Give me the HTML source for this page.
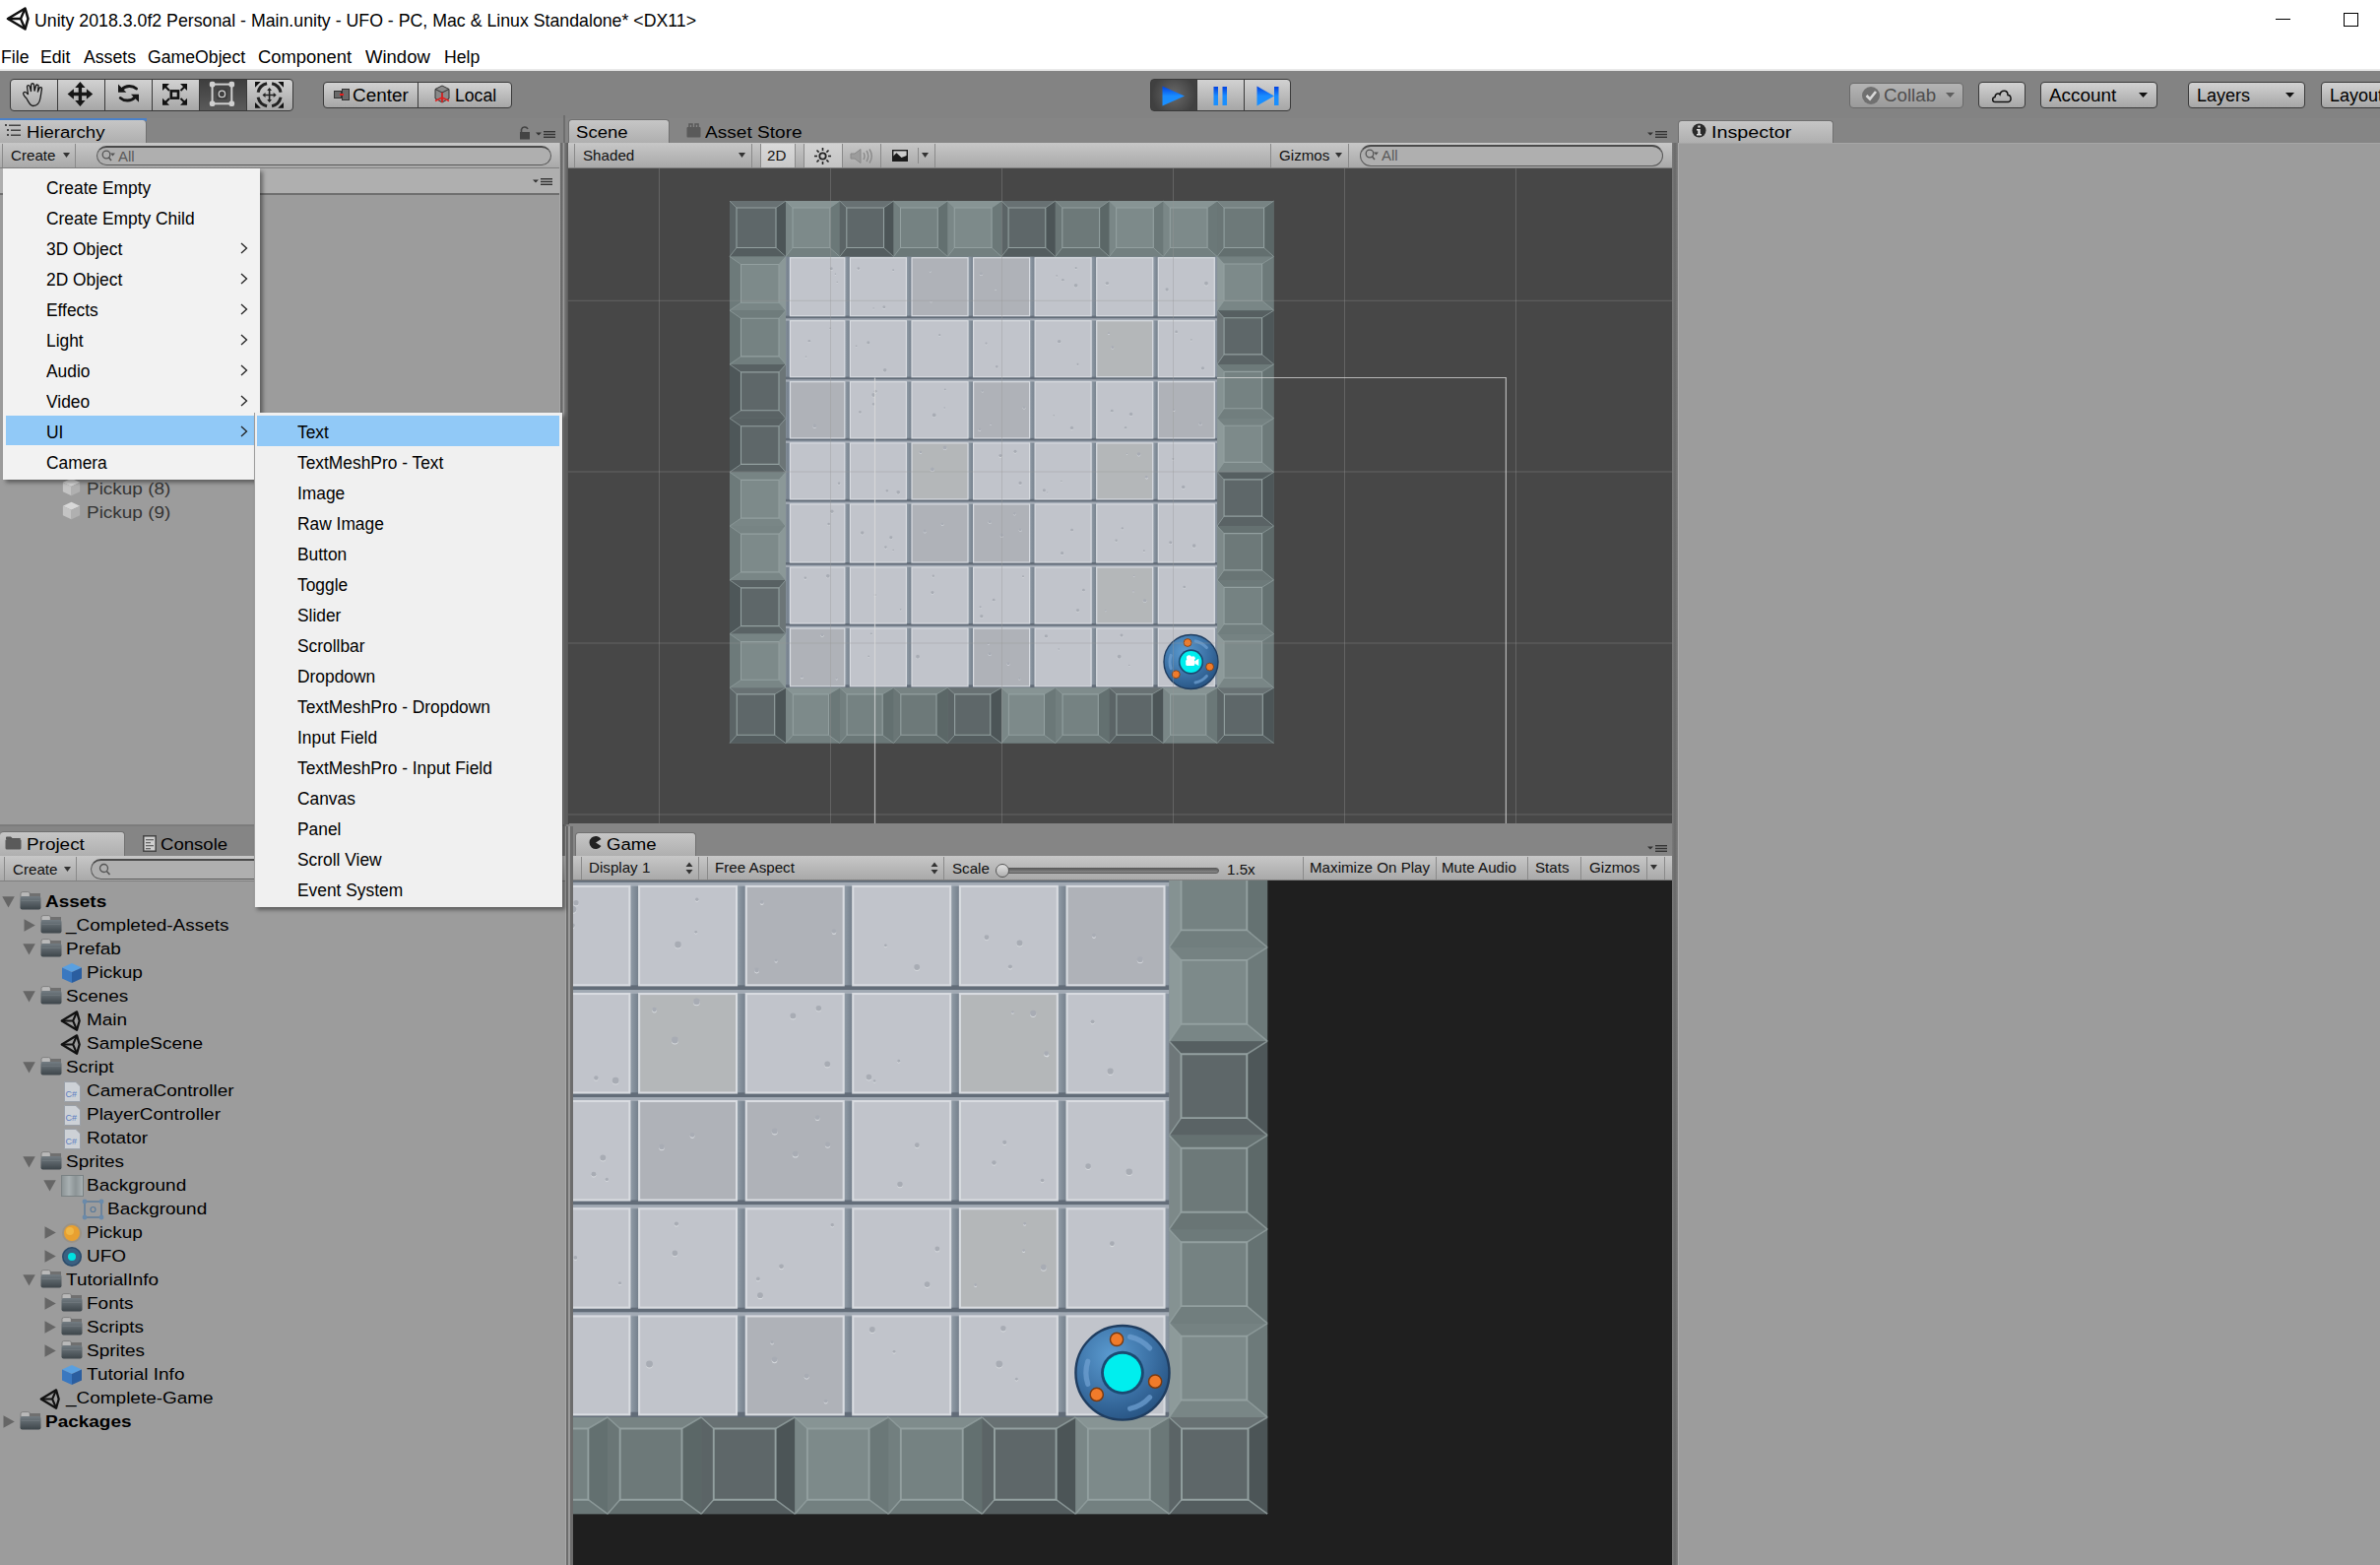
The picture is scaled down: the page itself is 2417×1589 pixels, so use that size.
<!DOCTYPE html><html><head><meta charset="utf-8"><style>
*{box-sizing:border-box}
html,body{margin:0;padding:0;width:2417px;height:1589px;overflow:hidden;background:#fff;font-family:"Liberation Sans",sans-serif;color:#000}
.a{position:absolute}
.t{position:absolute;white-space:nowrap;line-height:1;font-family:"Liberation Sans",sans-serif}
.tbtn{position:absolute;border:1.5px solid #3a3a3a;background:linear-gradient(#d2d2d2,#a6a6a6)}
.tab{position:absolute;background:linear-gradient(#c6c6c6,#afafaf);border:1px solid #707070;border-bottom:none;border-radius:4px 4px 0 0}
.tbar{position:absolute;background:linear-gradient(#c7c7c7,#a9a9a9);border-bottom:1px solid #808080}
.sep{position:absolute;width:1px;background:#8a8a8a}
.menu{position:absolute;background:#f2f2f2;box-shadow:3px 3px 4px rgba(0,0,0,.4)}
.pill{position:absolute;border:1.5px solid #5a5a5a;border-top:2px solid #4a4a4a;border-radius:12px;background:#afafaf}
</style></head><body>
<svg class="a" style="left:6px;top:7px" width="24" height="24" viewBox="0 0 24 24"><path d="M19.5 1.5 L2 12 L19.5 22.5 L22.5 12 Z" fill="none" stroke="#111" stroke-width="2.6" stroke-linejoin="round"/><path d="M2 12 L15 12 M19.5 1.5 L15 12 L19.5 22.5" fill="none" stroke="#111" stroke-width="2.4"/></svg>
<div class="t" style="left:34.5px;top:12.0px;font-size:18.6px;color:#000;font-weight:normal;transform:scaleX(0.954);transform-origin:0 0;">Unity 2018.3.0f2 Personal - Main.unity - UFO - PC, Mac &amp; Linux Standalone* &lt;DX11&gt;</div>
<div class="a" style="left:2311px;top:19px;width:15px;height:1px;background:#000"></div>
<div class="a" style="left:2380px;top:12.5px;width:15px;height:14.5px;border:1px solid #000"></div>
<div class="t" style="left:1px;top:49.1px;font-size:18.7px;color:#000;font-weight:normal;transform:scaleX(0.945);transform-origin:0 0;">File</div>
<div class="t" style="left:41px;top:49.1px;font-size:18.7px;color:#000;font-weight:normal;transform:scaleX(0.945);transform-origin:0 0;">Edit</div>
<div class="t" style="left:84.5px;top:49.1px;font-size:18.7px;color:#000;font-weight:normal;transform:scaleX(0.945);transform-origin:0 0;">Assets</div>
<div class="t" style="left:150px;top:49.1px;font-size:18.7px;color:#000;font-weight:normal;transform:scaleX(0.945);transform-origin:0 0;">GameObject</div>
<div class="t" style="left:261.5px;top:49.1px;font-size:18.7px;color:#000;font-weight:normal;transform:scaleX(0.985);transform-origin:0 0;">Component</div>
<div class="t" style="left:370.5px;top:49.1px;font-size:18.7px;color:#000;font-weight:normal;transform:scaleX(0.99);transform-origin:0 0;">Window</div>
<div class="t" style="left:450.5px;top:49.1px;font-size:18.7px;color:#000;font-weight:normal;transform:scaleX(0.945);transform-origin:0 0;">Help</div>
<div class="a" style="left:0;top:70px;width:2417px;height:2px;background:#e9e9e9"></div>
<div class="a" style="left:0;top:72px;width:2417px;height:48px;background:#838383"></div>
<div class="tbtn" style="left:10px;top:80px;width:49px;height:33px;border-radius:4px 0 0 4px"></div>
<div class="tbtn" style="left:58px;top:80px;width:49px;height:33px;border-radius:0"></div>
<div class="tbtn" style="left:106px;top:80px;width:49px;height:33px;border-radius:0"></div>
<div class="tbtn" style="left:154px;top:80px;width:49px;height:33px;border-radius:0"></div>
<div class="tbtn" style="left:202px;top:80px;width:49px;height:33px;background:linear-gradient(#3e3e3e,#5a5a5a);border-radius:0"></div>
<div class="tbtn" style="left:250px;top:80px;width:48px;height:33px;border-radius:0 4px 4px 0"></div>
<svg class="a" style="left:10px;top:80px" width="290" height="33" viewBox="0 0 290 33"><path d="M17 20 C14 17 12.5 14.5 14.5 13.5 C16 13 17.5 14.5 18.5 16 L17.5 8 C17.3 6.3 19.8 6 20.2 7.6 L21.5 13 L21.7 6 C21.8 4.3 24.3 4.3 24.5 6 L25 12.5 L26.5 7 C27 5.5 29.3 5.8 29 7.5 L28.3 13.5 L30 9.5 C30.6 8 32.8 8.5 32.5 10.2 L31 19.5 C30.3 24 28.3 27.5 23.5 27.5 C20.5 27.5 19 23.5 17 20 Z" fill="none" stroke="#1a1a1a" stroke-width="1.3"/><path d="M71.4 2.9 L76.6 9 L73.1 9 L73.1 13.8 L77.9 13.8 L77.9 10.3 L84.2 15.5 L77.9 20.7 L77.9 17.2 L73.1 17.2 L73.1 22 L76.6 22 L71.4 28.1 L66.2 22 L69.7 22 L69.7 17.2 L64.9 17.2 L64.9 20.7 L58.6 15.5 L64.9 10.3 L64.9 13.8 L69.7 13.8 L69.7 9 L66.2 9 Z" fill="#161616"/><path d="M128.5 10 A9.5 8 0 0 0 114 10.5" fill="none" stroke="#161616" stroke-width="3" stroke-linecap="round"/><path d="M110 5.5 L110 13.8 L118.3 13.8 Z" fill="#161616"/><path d="M112.3 19.5 A9.5 8 0 0 0 126.8 19" fill="none" stroke="#161616" stroke-width="3" stroke-linecap="round"/><path d="M131 15.8 L131 23.8 L123 15.8 Z" fill="#161616"/><rect x="163.8" y="12.4" width="7.2" height="7.2" fill="none" stroke="#111" stroke-width="2.6"/><path d="M156.5 6.5 L162 12 M179 6.5 L173.5 12 M156.5 25.5 L162 20 M179 25.5 L173.5 20" stroke="#111" stroke-width="2"/><path d="M155 5 L162 5 L155 12 Z M180 5 L173 5 L180 12 Z M155 26.8 L162 26.8 L155 19.8 Z M180 26.8 L173 26.8 L180 19.8 Z" fill="#111"/><rect x="205.6" y="5.6" width="19.7" height="19.7" fill="none" stroke="#cfcfcf" stroke-width="2"/><rect x="210" y="10" width="11" height="11" rx="2" fill="#3e3e3e"/><rect x="202.8" y="2.8" width="5.6" height="5.6" rx="2" fill="#cfcfcf"/><rect x="222.5" y="2.8" width="5.6" height="5.6" rx="2" fill="#cfcfcf"/><rect x="202.8" y="22.5" width="5.6" height="5.6" rx="2" fill="#cfcfcf"/><rect x="222.5" y="22.5" width="5.6" height="5.6" rx="2" fill="#cfcfcf"/><circle cx="215.4" cy="15.4" r="3.2" fill="none" stroke="#cfcfcf" stroke-width="1.3"/><path d="M275.1 18.7 A11.8 11.8 0 0 1 266.1 27.7 M261.1 27.7 A11.8 11.8 0 0 1 252.1 18.7 M252.1 13.7 A11.8 11.8 0 0 1 261.1 4.7 M266.1 4.7 A11.8 11.8 0 0 1 275.1 13.7" fill="none" stroke="#222" stroke-width="3"/><path d="M249 3.1 L254.8 3.1 L249 8.8 Z M278 3.1 L272.2 3.1 L278 8.8 Z M249 29.7 L254.8 29.7 L249 24 Z M278 29.7 L272.2 29.7 L278 24 Z" fill="#111"/><path d="M263.6 10 L263.6 23 M257.5 16.5 L269.7 16.5" stroke="#222" stroke-width="1.6"/><path d="M263.6 9 L266 12 L261.2 12 Z M263.6 24 L266 21 L261.2 21 Z M256.5 16.5 L259.5 14 L259.5 19 Z M270.7 16.5 L267.7 14 L267.7 19 Z" fill="#222"/></svg>
<div class="tbtn" style="left:328px;top:83px;width:97px;height:27px;border-radius:4px 0 0 4px"></div>
<div class="tbtn" style="left:424px;top:83px;width:96px;height:27px;border-radius:0 4px 4px 0"></div>
<svg class="a" style="left:339px;top:90px" width="16" height="12"><rect x="0.5" y="2.5" width="7" height="7" fill="#6a6a6a" stroke="#333"/><rect x="8.5" y="0.5" width="7" height="11" fill="#6a6a6a" stroke="#333"/><rect x="6" y="5" width="4" height="2" fill="#e02020"/></svg>
<div class="t" style="left:358px;top:87.7px;font-size:18px;color:#000;font-weight:normal;transform:scaleX(1.05);transform-origin:0 0;">Center</div>
<svg class="a" style="left:441px;top:86px" width="16" height="20" viewBox="0 0 16 20"><path d="M8 1 L15 4.5 L15 14 L8 18 L1 14 L1 4.5 Z" fill="#8a8a8a" stroke="#333"/><path d="M1 4.5 L8 8 L15 4.5 M8 8 L8 18" fill="none" stroke="#333"/><path d="M8 8 L8 18 M8 13 L1 16.5 M8 13 L15 16.5" stroke="#e02020" stroke-width="1.6"/></svg>
<div class="t" style="left:461.5px;top:87.7px;font-size:18px;color:#000;font-weight:normal;transform:scaleX(0.98);transform-origin:0 0;">Local</div>
<div class="tbtn" style="left:1168px;top:80px;width:48px;height:33px;border-radius:4px 0 0 4px;background:radial-gradient(circle at 50% 50%,#6a6a6a,#404040 80%)"></div>
<div class="tbtn" style="left:1215px;top:80px;width:49px;height:33px"></div>
<div class="tbtn" style="left:1263px;top:80px;width:48px;height:33px;border-radius:0 4px 4px 0"></div>
<svg class="a" style="left:1168px;top:80px" width="143" height="33"><defs><linearGradient id="bl" x1="0" y1="0" x2="0" y2="1"><stop offset="0" stop-color="#0040e0"/><stop offset="0.5" stop-color="#1a8cff"/><stop offset="1" stop-color="#1a90ff"/></linearGradient></defs><path d="M12.5 7.5 L35 17.5 L12.5 27.5 Z" fill="url(#bl)"/><rect x="64.5" y="8" width="4.5" height="19" fill="url(#bl)"/><rect x="73.5" y="8" width="4.5" height="19" fill="url(#bl)"/><path d="M108.5 7.5 L126 17.5 L108.5 27.5 Z" fill="url(#bl)"/><rect x="126" y="8" width="4.5" height="19" fill="url(#bl)"/></svg>
<div class="tbtn" style="left:1878px;top:84px;width:116px;height:26px;border-radius:4px;border-color:#6a6a6a;background:linear-gradient(#b4b4b4,#9a9a9a)"></div>
<svg class="a" style="left:1890px;top:87px" width="20" height="20"><circle cx="10" cy="10" r="9" fill="#707070"/><path d="M5.5 10 L9 13.5 L15 6" fill="none" stroke="#d8d8d8" stroke-width="2.6"/></svg>
<div class="t" style="left:1913px;top:87.7px;font-size:18px;color:#4e4e4e;font-weight:normal;transform:scaleX(1.04);transform-origin:0 0;">Collab</div>
<svg class="a" style="left:1976px;top:94px" width="10" height="6"><path d="M0 0 L9 0 L4.5 5 Z" fill="#5e5e5e"/></svg>
<div class="tbtn" style="left:2009px;top:83px;width:48px;height:27px;border-radius:4px"></div>
<svg class="a" style="left:2022px;top:89px" width="22" height="16" viewBox="0 0 22 16"><path d="M4 14.5 C1 14.5 0.8 10 4 9.5 C4 6 7.5 5 9 7 C10 2 17 2 17 7.5 C21 7.5 21 14.5 17.5 14.5 Z" fill="none" stroke="#111" stroke-width="1.5"/></svg>
<div class="tbtn" style="left:2072px;top:83px;width:119px;height:27px;border-radius:4px"></div>
<div class="t" style="left:2081px;top:87.7px;font-size:18px;color:#000;font-weight:normal;transform:scaleX(1.05);transform-origin:0 0;">Account</div>
<svg class="a" style="left:2172px;top:94px" width="10" height="6"><path d="M0 0 L9 0 L4.5 5 Z" fill="#111"/></svg>
<div class="tbtn" style="left:2222px;top:83px;width:119px;height:27px;border-radius:4px"></div>
<div class="t" style="left:2231px;top:87.7px;font-size:18px;color:#000;font-weight:normal;">Layers</div>
<svg class="a" style="left:2321px;top:94px" width="10" height="6"><path d="M0 0 L9 0 L4.5 5 Z" fill="#111"/></svg>
<div class="tbtn" style="left:2357px;top:83px;width:80px;height:27px;border-radius:4px"></div>
<div class="t" style="left:2366px;top:87.7px;font-size:18px;color:#000;font-weight:normal;">Layout</div>
<div class="a" style="left:0;top:120px;width:2417px;height:1469px;background:#858585"></div>
<div class="a" style="left:0;top:120px;width:149px;height:3px;background:#4a80c8"></div>
<div class="tab" style="left:0;top:122px;width:149px;height:23px;border-left:none;border-top:none;border-radius:0 4px 0 0"></div>
<svg class="a" style="left:5px;top:126px" width="18" height="13"><rect x="0" y="0" width="2" height="2" fill="#444"/><rect x="4" y="0.5" width="12" height="1.5" fill="#444"/><rect x="2" y="5" width="2" height="2" fill="#444"/><rect x="6" y="5.5" width="10" height="1.5" fill="#444"/><rect x="2" y="10" width="2" height="2" fill="#444"/><rect x="6" y="10.5" width="10" height="1.5" fill="#444"/></svg>
<div class="t" style="left:26.5px;top:125.7px;font-size:17.2px;color:#000;font-weight:normal;transform:scaleX(1.08);transform-origin:0 0;">Hierarchy</div>
<svg class="a" style="left:527px;top:128px" width="12" height="14" viewBox="0 0 12 14"><path d="M2.5 6 L2.5 3.5 A3.5 3.5 0 0 1 9 3" fill="none" stroke="#444" stroke-width="1.6"/><rect x="1" y="6" width="10" height="7.5" fill="#444"/></svg>
<svg class="a" style="left:544px;top:133px" width="21" height="8"><path d="M0 1.5 L6 1.5 L3 4.5 Z" fill="#333"/><rect x="8" y="0" width="12" height="1.4" fill="#333"/><rect x="8" y="2.8" width="12" height="1.4" fill="#333"/><rect x="8" y="5.6" width="12" height="1.4" fill="#333"/></svg>
<div class="tbar" style="left:0;top:145px;width:570px;height:26px"></div>
<div class="sep" style="left:2px;top:146px;height:24px"></div>
<div class="t" style="left:11px;top:151.3px;font-size:14.3px;color:#111;font-weight:normal;transform:scaleX(1.06);transform-origin:0 0;">Create</div>
<svg class="a" style="left:64px;top:155px" width="8" height="6"><path d="M0 0 L7 0 L3.5 5 Z" fill="#333"/></svg>
<div class="sep" style="left:76px;top:146px;height:24px"></div>
<div class="pill" style="left:98px;top:148px;width:462px;height:20px"></div>
<svg class="a" style="left:103px;top:152px" width="18" height="13"><circle cx="5" cy="5" r="3.8" fill="none" stroke="#555" stroke-width="1.3"/><path d="M7.5 8 L10 11" stroke="#555" stroke-width="1.5"/><path d="M9 3.5 L14 3.5 L11.5 6.5 Z" fill="#555"/></svg>
<div class="t" style="left:120px;top:150.8px;font-size:15px;color:#5a5a5a;font-weight:normal;">All</div>
<div class="a" style="left:0;top:171px;width:570px;height:666px;background:#9c9c9c"></div>
<div class="a" style="left:0;top:171px;width:570px;height:27px;background:#afafaf;border-bottom:2px solid #6f6f6f"></div>
<svg class="a" style="left:541px;top:181px" width="21" height="8"><path d="M0 1.5 L6 1.5 L3 4.5 Z" fill="#333"/><rect x="8" y="0" width="12" height="1.4" fill="#333"/><rect x="8" y="2.8" width="12" height="1.4" fill="#333"/><rect x="8" y="5.6" width="12" height="1.4" fill="#333"/></svg>
<div class="a" style="left:568px;top:145px;width:10px;height:692px;background:linear-gradient(90deg,#a8a8a8 0,#a8a8a8 1px,#6a6a6a 1px,#6c6c6c 3.3px,#7e7e7e 3.3px,#8a8a8a 4.3px,#9a9a9a 4.3px,#9a9a9a 5px,#7c7c7c 5px,#5a5a5a 9px,#474747 10px)"></div>
<svg class="a" style="left:63px;top:485px" width="19" height="19" viewBox="0 0 22 22"><path d="M11 1 L21 5.5 L11 10 L1 5.5 Z" fill="#d8d8d8"/><path d="M1 5.5 L11 10 L11 21 L1 16.5 Z" fill="#c4c4c4"/><path d="M21 5.5 L11 10 L11 21 L21 16.5 Z" fill="#b0b0b0"/></svg>
<div class="t" style="left:88px;top:488.7px;font-size:16.8px;color:#333;font-weight:normal;transform:scaleX(1.13);transform-origin:0 0;">Pickup (8)</div>
<svg class="a" style="left:63px;top:509px" width="19" height="19" viewBox="0 0 22 22"><path d="M11 1 L21 5.5 L11 10 L1 5.5 Z" fill="#d8d8d8"/><path d="M1 5.5 L11 10 L11 21 L1 16.5 Z" fill="#c4c4c4"/><path d="M21 5.5 L11 10 L11 21 L21 16.5 Z" fill="#b0b0b0"/></svg>
<div class="t" style="left:88px;top:512.7px;font-size:16.8px;color:#333;font-weight:normal;transform:scaleX(1.13);transform-origin:0 0;">Pickup (9)</div>
<div class="a" style="left:0;top:837px;width:575px;height:2px;background:#7c7c7c"></div>
<div class="tab" style="left:0;top:844px;width:127px;height:25px;border-left:none"></div>
<svg class="a" style="left:5px;top:849px" width="17" height="14" viewBox="0 0 17 14"><path d="M1 3 L1 1.5 Q1 0.5 2 0.5 L6 0.5 L7.5 2 L15 2 Q16 2 16 3 Z" fill="#555"/><rect x="0.5" y="3" width="16" height="10.5" rx="1.5" fill="#5a5a5a"/></svg>
<div class="t" style="left:26.5px;top:848.7px;font-size:17.2px;color:#000;font-weight:normal;transform:scaleX(1.1);transform-origin:0 0;">Project</div>
<svg class="a" style="left:145px;top:848px" width="14" height="17" viewBox="0 0 14 17"><rect x="0.8" y="0.8" width="12.4" height="15.4" fill="#d0d0d0" stroke="#444" stroke-width="1.5"/><rect x="3" y="4" width="8" height="1.3" fill="#666"/><rect x="3" y="7" width="5" height="1.3" fill="#666"/><rect x="3" y="10" width="8" height="1.3" fill="#666"/><rect x="3" y="13" width="5" height="1.3" fill="#666"/></svg>
<div class="t" style="left:163px;top:848.7px;font-size:17.2px;color:#000;font-weight:normal;transform:scaleX(1.08);transform-origin:0 0;">Console</div>
<div class="tbar" style="left:0;top:869px;width:575px;height:26px"></div>
<div class="sep" style="left:4px;top:870px;height:24px"></div>
<div class="t" style="left:12.5px;top:875.6px;font-size:14.3px;color:#111;font-weight:normal;transform:scaleX(1.06);transform-origin:0 0;">Create</div>
<svg class="a" style="left:65px;top:880px" width="8" height="6"><path d="M0 0 L7 0 L3.5 5 Z" fill="#333"/></svg>
<div class="sep" style="left:77px;top:870px;height:24px"></div>
<div class="pill" style="left:92px;top:872px;width:470px;height:21px"></div>
<svg class="a" style="left:100px;top:876px" width="14" height="14"><circle cx="5.5" cy="5.5" r="4" fill="none" stroke="#555" stroke-width="1.3"/><path d="M8.3 8.5 L11.5 12" stroke="#555" stroke-width="1.6"/></svg>
<div class="a" style="left:0;top:895px;width:575px;height:694px;background:#9c9c9c"></div>
<div class="a" style="left:574px;top:839px;width:8px;height:750px;background:linear-gradient(90deg,#a8a8a8 0,#a8a8a8 1px,#6a6a6a 1px,#6e6e6e 3px,#9a9a9a 3px,#9a9a9a 5.3px,#6c6c6c 5.3px,#6c6c6c 8px)"></div>
<div class="a" style="left:572px;top:117px;width:1.5px;height:28px;background:#6e6e6e"></div>
<div class="tab" style="left:577px;top:121px;width:103px;height:24px"></div>
<div class="t" style="left:585px;top:125.7px;font-size:17.2px;color:#000;font-weight:normal;transform:scaleX(1.08);transform-origin:0 0;">Scene</div>
<svg class="a" style="left:697px;top:125px" width="15" height="15" viewBox="0 0 15 15"><rect x="0.5" y="4" width="14" height="10.5" rx="1" fill="#5a5a5a"/><path d="M3 4 L3 1 L6 1 L6 4 M9 4 L9 1 L12 1 L12 4" fill="none" stroke="#5a5a5a" stroke-width="1.6"/></svg>
<div class="t" style="left:716px;top:125.7px;font-size:17.2px;color:#000;font-weight:normal;transform:scaleX(1.11);transform-origin:0 0;">Asset Store</div>
<svg class="a" style="left:1673px;top:133px" width="21" height="8"><path d="M0 1.5 L6 1.5 L3 4.5 Z" fill="#333"/><rect x="8" y="0" width="12" height="1.4" fill="#333"/><rect x="8" y="2.8" width="12" height="1.4" fill="#333"/><rect x="8" y="5.6" width="12" height="1.4" fill="#333"/></svg>
<div class="tbar" style="left:577px;top:145px;width:1121px;height:26px"></div>
<div class="sep" style="left:583px;top:146px;height:24px"></div>
<div class="t" style="left:592px;top:150.8px;font-size:14.3px;color:#111;font-weight:normal;transform:scaleX(1.06);transform-origin:0 0;">Shaded</div>
<svg class="a" style="left:750px;top:155px" width="8" height="6"><path d="M0 0 L7 0 L3.5 5 Z" fill="#333"/></svg>
<div class="sep" style="left:763px;top:146px;height:24px"></div><div class="sep" style="left:772px;top:146px;height:24px"></div>
<div class="a" style="left:773px;top:146px;width:34px;height:24px;background:linear-gradient(#dadada,#c8c8c8)"></div>
<div class="t" style="left:779px;top:150.8px;font-size:14.3px;color:#111;font-weight:normal;transform:scaleX(1.06);transform-origin:0 0;">2D</div>
<div class="sep" style="left:807px;top:146px;height:24px"></div><div class="sep" style="left:816px;top:146px;height:24px"></div>
<div class="a" style="left:817px;top:146px;width:38px;height:24px;background:linear-gradient(#d2d2d2,#c4c4c4)"></div>
<svg class="a" style="left:826px;top:149px" width="19" height="19" viewBox="0 0 19 19"><circle cx="9.5" cy="9.5" r="3.2" fill="none" stroke="#222" stroke-width="1.8"/><path d="M15.0 9.5 L18.0 9.5" stroke="#222" stroke-width="1.6"/><path d="M13.4 13.4 L15.5 15.5" stroke="#222" stroke-width="1.6"/><path d="M9.5 15.0 L9.5 18.0" stroke="#222" stroke-width="1.6"/><path d="M5.6 13.4 L3.5 15.5" stroke="#222" stroke-width="1.6"/><path d="M4.0 9.5 L1.0 9.5" stroke="#222" stroke-width="1.6"/><path d="M5.6 5.6 L3.5 3.5" stroke="#222" stroke-width="1.6"/><path d="M9.5 4.0 L9.5 1.0" stroke="#222" stroke-width="1.6"/><path d="M13.4 5.6 L15.5 3.5" stroke="#222" stroke-width="1.6"/></svg>
<div class="sep" style="left:855px;top:146px;height:24px"></div>
<svg class="a" style="left:863px;top:150px" width="24" height="17" viewBox="0 0 24 17"><path d="M1 6 L5 6 L11 1.5 L11 15.5 L5 11 L1 11 Z" fill="#9c9c9c" stroke="#888" stroke-width="1"/><path d="M14 5 Q16 8.5 14 12 M17 3 Q20.5 8.5 17 14 M20 1.5 Q24.5 8.5 20 15.5" fill="none" stroke="#8a8a8a" stroke-width="1.4"/></svg>
<div class="sep" style="left:894px;top:146px;height:24px"></div>
<svg class="a" style="left:906px;top:152px" width="16" height="12" viewBox="0 0 16 12"><rect x="0.7" y="0.7" width="14.6" height="10.6" fill="#cdcdcd" stroke="#1a1a1a" stroke-width="1.4"/><path d="M0.7 11.3 L0.7 7 L4.4 3.2 L9.5 8 L15.3 5.8 L15.3 11.3 Z" fill="#1a1a1a"/></svg>
<div class="sep" style="left:932px;top:150px;height:16px"></div>
<svg class="a" style="left:936px;top:155px" width="8" height="6"><path d="M0 0 L7 0 L3.5 5 Z" fill="#333"/></svg>
<div class="sep" style="left:949px;top:146px;height:24px"></div>
<div class="sep" style="left:1290px;top:146px;height:24px"></div>
<div class="t" style="left:1299px;top:150.8px;font-size:14.3px;color:#111;font-weight:normal;transform:scaleX(1.06);transform-origin:0 0;">Gizmos</div>
<svg class="a" style="left:1356px;top:155px" width="8" height="6"><path d="M0 0 L7 0 L3.5 5 Z" fill="#333"/></svg>
<div class="sep" style="left:1369px;top:146px;height:24px"></div>
<div class="pill" style="left:1381px;top:147px;width:308px;height:22px"></div>
<svg class="a" style="left:1386px;top:151px" width="18" height="13"><circle cx="5" cy="5" r="3.8" fill="none" stroke="#555" stroke-width="1.3"/><path d="M7.5 8 L10 11" stroke="#555" stroke-width="1.5"/><path d="M9 3.5 L14 3.5 L11.5 6.5 Z" fill="#555"/></svg>
<div class="t" style="left:1403px;top:149.8px;font-size:15px;color:#5a5a5a;font-weight:normal;">All</div>
<div class="a" style="left:577px;top:171px;width:1121px;height:665px;background:#474747;overflow:hidden" id="scene"><svg width="1121" height="665" style="position:absolute;left:0;top:0"><g transform="translate(164,33)"><rect x="0" y="0" width="552.6" height="550.6" fill="#6b7878"/><defs><linearGradient id="vg" x1="0" y1="0" x2="1" y2="0"><stop offset="0" stop-color="#939ea9"/><stop offset="1" stop-color="#737e8a"/></linearGradient></defs><rect x="57" y="56.5" width="438.1" height="437.8" fill="#8591a0"/><rect x="54.2" y="56.5" width="5.6" height="437.8" fill="url(#vg)"/><rect x="116.8" y="56.5" width="5.6" height="437.8" fill="url(#vg)"/><rect x="179.4" y="56.5" width="5.6" height="437.8" fill="url(#vg)"/><rect x="242.0" y="56.5" width="5.6" height="437.8" fill="url(#vg)"/><rect x="304.5" y="56.5" width="5.6" height="437.8" fill="url(#vg)"/><rect x="367.1" y="56.5" width="5.6" height="437.8" fill="url(#vg)"/><rect x="429.7" y="56.5" width="5.6" height="437.8" fill="url(#vg)"/><rect x="492.3" y="56.5" width="5.6" height="437.8" fill="url(#vg)"/><rect x="57" y="116.7" width="438.1" height="2.7" fill="#626c78"/><rect x="57" y="119.4" width="438.1" height="2.3" fill="#a2aab4"/><rect x="57" y="178.7" width="438.1" height="2.7" fill="#626c78"/><rect x="57" y="181.4" width="438.1" height="2.3" fill="#a2aab4"/><rect x="57" y="240.9" width="438.1" height="2.7" fill="#626c78"/><rect x="57" y="243.6" width="438.1" height="2.3" fill="#a2aab4"/><rect x="57" y="302.9" width="438.1" height="2.7" fill="#626c78"/><rect x="57" y="305.6" width="438.1" height="2.3" fill="#a2aab4"/><rect x="57" y="367.0" width="438.1" height="2.7" fill="#626c78"/><rect x="57" y="369.7" width="438.1" height="2.3" fill="#a2aab4"/><rect x="57" y="429.0" width="438.1" height="2.7" fill="#626c78"/><rect x="57" y="431.7" width="438.1" height="2.3" fill="#a2aab4"/><rect x="57" y="491.3" width="438.1" height="3" fill="#626c78"/><rect x="61.5" y="57.7" width="55.3" height="59.0" fill="#c1c4cb" stroke="#d9dce1" stroke-width="1.2"/><circle cx="109.2" cy="83.1" r="0.8" fill="#d6d9dd"/><circle cx="109.2" cy="82.5" r="0.8" fill="#a8acb4"/><circle cx="103.3" cy="69.4" r="1.5" fill="#d6d9dd"/><circle cx="103.3" cy="68.8" r="1.5" fill="#a8acb4"/><circle cx="107.4" cy="74.9" r="0.8" fill="#d6d9dd"/><circle cx="107.4" cy="74.3" r="0.8" fill="#a8acb4"/><rect x="122.4" y="57.7" width="57.0" height="59.0" fill="#c1c4cb" stroke="#d9dce1" stroke-width="1.2"/><circle cx="130.8" cy="69.2" r="1.3" fill="#d6d9dd"/><circle cx="130.8" cy="68.6" r="1.3" fill="#a8acb4"/><circle cx="166.1" cy="70.8" r="1.0" fill="#d6d9dd"/><circle cx="166.1" cy="70.2" r="1.0" fill="#a8acb4"/><circle cx="156.8" cy="108.4" r="1.5" fill="#d6d9dd"/><circle cx="156.8" cy="107.8" r="1.5" fill="#a8acb4"/><circle cx="146.1" cy="109.7" r="0.8" fill="#d6d9dd"/><circle cx="146.1" cy="109.1" r="0.8" fill="#a8acb4"/><rect x="185.0" y="57.7" width="57.0" height="59.0" fill="#afb2b8" stroke="#d9dce1" stroke-width="1.2"/><circle cx="203.7" cy="71.7" r="0.9" fill="#d6d9dd"/><circle cx="203.7" cy="71.1" r="0.9" fill="#a8acb4"/><circle cx="204.5" cy="102.4" r="0.9" fill="#d6d9dd"/><circle cx="204.5" cy="101.8" r="0.9" fill="#a8acb4"/><rect x="247.6" y="57.7" width="57.0" height="59.0" fill="#afb2b8" stroke="#d9dce1" stroke-width="1.2"/><circle cx="270.1" cy="90.1" r="0.8" fill="#d6d9dd"/><circle cx="270.1" cy="89.5" r="0.8" fill="#a8acb4"/><circle cx="255.5" cy="74.5" r="1.6" fill="#d6d9dd"/><circle cx="255.5" cy="73.9" r="1.6" fill="#a8acb4"/><rect x="310.1" y="57.7" width="57.0" height="59.0" fill="#c1c4cb" stroke="#d9dce1" stroke-width="1.2"/><circle cx="351.6" cy="86.4" r="1.9" fill="#d6d9dd"/><circle cx="351.6" cy="85.8" r="1.9" fill="#a8acb4"/><circle cx="332.2" cy="76.5" r="0.9" fill="#d6d9dd"/><circle cx="332.2" cy="75.9" r="0.9" fill="#a8acb4"/><circle cx="351.7" cy="68.8" r="1.1" fill="#d6d9dd"/><circle cx="351.7" cy="68.2" r="1.1" fill="#a8acb4"/><circle cx="338.4" cy="80.8" r="1.3" fill="#d6d9dd"/><circle cx="338.4" cy="80.2" r="1.3" fill="#a8acb4"/><rect x="372.7" y="57.7" width="57.0" height="59.0" fill="#c1c4cb" stroke="#d9dce1" stroke-width="1.2"/><circle cx="383.4" cy="84.2" r="1.7" fill="#d6d9dd"/><circle cx="383.4" cy="83.6" r="1.7" fill="#a8acb4"/><rect x="435.3" y="57.7" width="57.0" height="59.0" fill="#c1c4cb" stroke="#d9dce1" stroke-width="1.2"/><circle cx="484.0" cy="84.4" r="2.0" fill="#d6d9dd"/><circle cx="484.0" cy="83.8" r="2.0" fill="#a8acb4"/><circle cx="444.1" cy="90.6" r="1.7" fill="#d6d9dd"/><circle cx="444.1" cy="90.0" r="1.7" fill="#a8acb4"/><rect x="61.5" y="121.7" width="55.3" height="57.0" fill="#c1c4cb" stroke="#d9dce1" stroke-width="1.2"/><circle cx="80.8" cy="142.9" r="1.3" fill="#d6d9dd"/><circle cx="80.8" cy="142.3" r="1.3" fill="#a8acb4"/><circle cx="102.1" cy="130.0" r="0.8" fill="#d6d9dd"/><circle cx="102.1" cy="129.4" r="0.8" fill="#a8acb4"/><circle cx="77.6" cy="158.9" r="0.8" fill="#d6d9dd"/><circle cx="77.6" cy="158.3" r="0.8" fill="#a8acb4"/><rect x="122.4" y="121.7" width="57.0" height="57.0" fill="#c1c4cb" stroke="#d9dce1" stroke-width="1.2"/><circle cx="157.7" cy="172.5" r="1.8" fill="#d6d9dd"/><circle cx="157.7" cy="171.9" r="1.8" fill="#a8acb4"/><circle cx="140.8" cy="144.5" r="1.6" fill="#d6d9dd"/><circle cx="140.8" cy="143.9" r="1.6" fill="#a8acb4"/><circle cx="128.6" cy="148.0" r="0.9" fill="#d6d9dd"/><circle cx="128.6" cy="147.4" r="0.9" fill="#a8acb4"/><rect x="185.0" y="121.7" width="57.0" height="57.0" fill="#c1c4cb" stroke="#d9dce1" stroke-width="1.2"/><circle cx="213.2" cy="136.8" r="1.1" fill="#d6d9dd"/><circle cx="213.2" cy="136.2" r="1.1" fill="#a8acb4"/><rect x="247.6" y="121.7" width="57.0" height="57.0" fill="#c1c4cb" stroke="#d9dce1" stroke-width="1.2"/><circle cx="271.3" cy="169.0" r="1.3" fill="#d6d9dd"/><circle cx="271.3" cy="168.4" r="1.3" fill="#a8acb4"/><circle cx="260.5" cy="145.3" r="1.1" fill="#d6d9dd"/><circle cx="260.5" cy="144.7" r="1.1" fill="#a8acb4"/><rect x="310.1" y="121.7" width="57.0" height="57.0" fill="#c1c4cb" stroke="#d9dce1" stroke-width="1.2"/><circle cx="353.5" cy="166.5" r="1.1" fill="#d6d9dd"/><circle cx="353.5" cy="165.9" r="1.1" fill="#a8acb4"/><circle cx="334.7" cy="143.3" r="1.8" fill="#d6d9dd"/><circle cx="334.7" cy="142.7" r="1.8" fill="#a8acb4"/><rect x="372.7" y="121.7" width="57.0" height="57.0" fill="#b4b7b9" stroke="#d9dce1" stroke-width="1.2"/><circle cx="385.0" cy="134.9" r="1.0" fill="#d6d9dd"/><circle cx="385.0" cy="134.3" r="1.0" fill="#a8acb4"/><circle cx="388.8" cy="149.1" r="1.5" fill="#d6d9dd"/><circle cx="388.8" cy="148.5" r="1.5" fill="#a8acb4"/><rect x="435.3" y="121.7" width="57.0" height="57.0" fill="#c1c4cb" stroke="#d9dce1" stroke-width="1.2"/><circle cx="453.6" cy="133.5" r="1.4" fill="#d6d9dd"/><circle cx="453.6" cy="132.9" r="1.4" fill="#a8acb4"/><circle cx="468.9" cy="141.5" r="0.9" fill="#d6d9dd"/><circle cx="468.9" cy="140.9" r="0.9" fill="#a8acb4"/><circle cx="480.5" cy="170.5" r="1.6" fill="#d6d9dd"/><circle cx="480.5" cy="169.9" r="1.6" fill="#a8acb4"/><rect x="61.5" y="183.7" width="55.3" height="57.2" fill="#afb2b8" stroke="#d9dce1" stroke-width="1.2"/><circle cx="86.3" cy="229.0" r="1.9" fill="#d6d9dd"/><circle cx="86.3" cy="228.4" r="1.9" fill="#a8acb4"/><rect x="122.4" y="183.7" width="57.0" height="57.2" fill="#c1c4cb" stroke="#d9dce1" stroke-width="1.2"/><circle cx="146.1" cy="207.0" r="1.3" fill="#d6d9dd"/><circle cx="146.1" cy="206.4" r="1.3" fill="#a8acb4"/><circle cx="146.2" cy="197.6" r="2.0" fill="#d6d9dd"/><circle cx="146.2" cy="197.0" r="2.0" fill="#a8acb4"/><circle cx="148.1" cy="193.9" r="1.5" fill="#d6d9dd"/><circle cx="148.1" cy="193.3" r="1.5" fill="#a8acb4"/><circle cx="132.4" cy="215.0" r="1.4" fill="#d6d9dd"/><circle cx="132.4" cy="214.4" r="1.4" fill="#a8acb4"/><rect x="185.0" y="183.7" width="57.0" height="57.2" fill="#c1c4cb" stroke="#d9dce1" stroke-width="1.2"/><circle cx="218.8" cy="192.0" r="1.0" fill="#d6d9dd"/><circle cx="218.8" cy="191.4" r="1.0" fill="#a8acb4"/><circle cx="207.7" cy="218.1" r="1.9" fill="#d6d9dd"/><circle cx="207.7" cy="217.5" r="1.9" fill="#a8acb4"/><circle cx="218.2" cy="210.7" r="0.8" fill="#d6d9dd"/><circle cx="218.2" cy="210.1" r="0.8" fill="#a8acb4"/><rect x="247.6" y="183.7" width="57.0" height="57.2" fill="#afb2b8" stroke="#d9dce1" stroke-width="1.2"/><circle cx="299.0" cy="210.3" r="1.3" fill="#d6d9dd"/><circle cx="299.0" cy="209.7" r="1.3" fill="#a8acb4"/><circle cx="256.8" cy="193.5" r="1.1" fill="#d6d9dd"/><circle cx="256.8" cy="192.9" r="1.1" fill="#a8acb4"/><circle cx="265.1" cy="227.1" r="0.9" fill="#d6d9dd"/><circle cx="265.1" cy="226.5" r="0.9" fill="#a8acb4"/><circle cx="253.8" cy="232.7" r="1.4" fill="#d6d9dd"/><circle cx="253.8" cy="232.1" r="1.4" fill="#a8acb4"/><rect x="310.1" y="183.7" width="57.0" height="57.2" fill="#c1c4cb" stroke="#d9dce1" stroke-width="1.2"/><circle cx="347.5" cy="231.0" r="1.7" fill="#d6d9dd"/><circle cx="347.5" cy="230.4" r="1.7" fill="#a8acb4"/><circle cx="329.2" cy="218.5" r="0.8" fill="#d6d9dd"/><circle cx="329.2" cy="217.9" r="0.8" fill="#a8acb4"/><rect x="372.7" y="183.7" width="57.0" height="57.2" fill="#c1c4cb" stroke="#d9dce1" stroke-width="1.2"/><circle cx="402.1" cy="230.8" r="1.2" fill="#d6d9dd"/><circle cx="402.1" cy="230.2" r="1.2" fill="#a8acb4"/><circle cx="388.3" cy="213.8" r="1.4" fill="#d6d9dd"/><circle cx="388.3" cy="213.2" r="1.4" fill="#a8acb4"/><circle cx="407.6" cy="217.1" r="1.7" fill="#d6d9dd"/><circle cx="407.6" cy="216.5" r="1.7" fill="#a8acb4"/><rect x="435.3" y="183.7" width="57.0" height="57.2" fill="#afb2b8" stroke="#d9dce1" stroke-width="1.2"/><circle cx="478.1" cy="226.6" r="1.7" fill="#d6d9dd"/><circle cx="478.1" cy="226.0" r="1.7" fill="#a8acb4"/><circle cx="451.1" cy="212.7" r="1.2" fill="#d6d9dd"/><circle cx="451.1" cy="212.1" r="1.2" fill="#a8acb4"/><rect x="61.5" y="245.9" width="55.3" height="57.0" fill="#c1c4cb" stroke="#d9dce1" stroke-width="1.2"/><circle cx="111.1" cy="287.3" r="1.3" fill="#d6d9dd"/><circle cx="111.1" cy="286.7" r="1.3" fill="#a8acb4"/><rect x="122.4" y="245.9" width="57.0" height="57.0" fill="#c1c4cb" stroke="#d9dce1" stroke-width="1.2"/><circle cx="159.8" cy="295.0" r="1.3" fill="#d6d9dd"/><circle cx="159.8" cy="294.4" r="1.3" fill="#a8acb4"/><circle cx="171.2" cy="296.4" r="1.9" fill="#d6d9dd"/><circle cx="171.2" cy="295.8" r="1.9" fill="#a8acb4"/><rect x="185.0" y="245.9" width="57.0" height="57.0" fill="#b4b7b9" stroke="#d9dce1" stroke-width="1.2"/><circle cx="193.9" cy="255.7" r="1.3" fill="#d6d9dd"/><circle cx="193.9" cy="255.1" r="1.3" fill="#a8acb4"/><circle cx="205.9" cy="273.2" r="2.0" fill="#d6d9dd"/><circle cx="205.9" cy="272.6" r="2.0" fill="#a8acb4"/><circle cx="218.6" cy="251.1" r="1.9" fill="#d6d9dd"/><circle cx="218.6" cy="250.5" r="1.9" fill="#a8acb4"/><rect x="247.6" y="245.9" width="57.0" height="57.0" fill="#c1c4cb" stroke="#d9dce1" stroke-width="1.2"/><circle cx="290.0" cy="254.9" r="1.6" fill="#d6d9dd"/><circle cx="290.0" cy="254.3" r="1.6" fill="#a8acb4"/><circle cx="295.1" cy="287.0" r="1.7" fill="#d6d9dd"/><circle cx="295.1" cy="286.4" r="1.7" fill="#a8acb4"/><circle cx="275.0" cy="259.2" r="1.7" fill="#d6d9dd"/><circle cx="275.0" cy="258.6" r="1.7" fill="#a8acb4"/><rect x="310.1" y="245.9" width="57.0" height="57.0" fill="#c1c4cb" stroke="#d9dce1" stroke-width="1.2"/><circle cx="319.4" cy="294.5" r="1.6" fill="#d6d9dd"/><circle cx="319.4" cy="293.9" r="1.6" fill="#a8acb4"/><circle cx="336.9" cy="285.2" r="0.8" fill="#d6d9dd"/><circle cx="336.9" cy="284.6" r="0.8" fill="#a8acb4"/><circle cx="322.7" cy="296.7" r="0.7" fill="#d6d9dd"/><circle cx="322.7" cy="296.1" r="0.7" fill="#a8acb4"/><rect x="372.7" y="245.9" width="57.0" height="57.0" fill="#b4b7b9" stroke="#d9dce1" stroke-width="1.2"/><circle cx="415.5" cy="257.7" r="1.8" fill="#d6d9dd"/><circle cx="415.5" cy="257.1" r="1.8" fill="#a8acb4"/><circle cx="423.6" cy="281.2" r="1.2" fill="#d6d9dd"/><circle cx="423.6" cy="280.6" r="1.2" fill="#a8acb4"/><circle cx="403.5" cy="257.0" r="0.7" fill="#d6d9dd"/><circle cx="403.5" cy="256.4" r="0.7" fill="#a8acb4"/><circle cx="423.2" cy="280.9" r="1.4" fill="#d6d9dd"/><circle cx="423.2" cy="280.3" r="1.4" fill="#a8acb4"/><rect x="435.3" y="245.9" width="57.0" height="57.0" fill="#c1c4cb" stroke="#d9dce1" stroke-width="1.2"/><circle cx="460.7" cy="291.1" r="1.8" fill="#d6d9dd"/><circle cx="460.7" cy="290.5" r="1.8" fill="#a8acb4"/><circle cx="450.3" cy="262.6" r="1.1" fill="#d6d9dd"/><circle cx="450.3" cy="262.0" r="1.1" fill="#a8acb4"/><rect x="61.5" y="307.9" width="55.3" height="59.1" fill="#c1c4cb" stroke="#d9dce1" stroke-width="1.2"/><circle cx="100.6" cy="328.7" r="1.4" fill="#d6d9dd"/><circle cx="100.6" cy="328.1" r="1.4" fill="#a8acb4"/><circle cx="103.9" cy="315.9" r="1.7" fill="#d6d9dd"/><circle cx="103.9" cy="315.3" r="1.7" fill="#a8acb4"/><rect x="122.4" y="307.9" width="57.0" height="59.1" fill="#c1c4cb" stroke="#d9dce1" stroke-width="1.2"/><circle cx="158.4" cy="352.2" r="1.4" fill="#d6d9dd"/><circle cx="158.4" cy="351.6" r="1.4" fill="#a8acb4"/><circle cx="166.1" cy="355.2" r="0.9" fill="#d6d9dd"/><circle cx="166.1" cy="354.6" r="0.9" fill="#a8acb4"/><circle cx="134.7" cy="337.6" r="1.8" fill="#d6d9dd"/><circle cx="134.7" cy="337.0" r="1.8" fill="#a8acb4"/><circle cx="163.8" cy="342.3" r="1.7" fill="#d6d9dd"/><circle cx="163.8" cy="341.7" r="1.7" fill="#a8acb4"/><rect x="185.0" y="307.9" width="57.0" height="59.1" fill="#afb2b8" stroke="#d9dce1" stroke-width="1.2"/><circle cx="198.2" cy="335.8" r="1.6" fill="#d6d9dd"/><circle cx="198.2" cy="335.2" r="1.6" fill="#a8acb4"/><circle cx="216.1" cy="328.7" r="1.4" fill="#d6d9dd"/><circle cx="216.1" cy="328.1" r="1.4" fill="#a8acb4"/><rect x="247.6" y="307.9" width="57.0" height="59.1" fill="#afb2b8" stroke="#d9dce1" stroke-width="1.2"/><circle cx="289.3" cy="318.1" r="1.4" fill="#d6d9dd"/><circle cx="289.3" cy="317.5" r="1.4" fill="#a8acb4"/><circle cx="264.3" cy="326.3" r="1.7" fill="#d6d9dd"/><circle cx="264.3" cy="325.7" r="1.7" fill="#a8acb4"/><circle cx="276.4" cy="340.0" r="1.7" fill="#d6d9dd"/><circle cx="276.4" cy="339.4" r="1.7" fill="#a8acb4"/><circle cx="295.3" cy="334.3" r="1.5" fill="#d6d9dd"/><circle cx="295.3" cy="333.7" r="1.5" fill="#a8acb4"/><rect x="310.1" y="307.9" width="57.0" height="59.1" fill="#c1c4cb" stroke="#d9dce1" stroke-width="1.2"/><circle cx="347.6" cy="334.8" r="1.4" fill="#d6d9dd"/><circle cx="347.6" cy="334.2" r="1.4" fill="#a8acb4"/><circle cx="337.6" cy="358.3" r="1.6" fill="#d6d9dd"/><circle cx="337.6" cy="357.7" r="1.6" fill="#a8acb4"/><rect x="372.7" y="307.9" width="57.0" height="59.1" fill="#c1c4cb" stroke="#d9dce1" stroke-width="1.2"/><circle cx="420.9" cy="355.9" r="1.0" fill="#d6d9dd"/><circle cx="420.9" cy="355.3" r="1.0" fill="#a8acb4"/><circle cx="398.8" cy="333.0" r="1.2" fill="#d6d9dd"/><circle cx="398.8" cy="332.4" r="1.2" fill="#a8acb4"/><circle cx="392.6" cy="345.3" r="1.3" fill="#d6d9dd"/><circle cx="392.6" cy="344.7" r="1.3" fill="#a8acb4"/><rect x="435.3" y="307.9" width="57.0" height="59.1" fill="#c1c4cb" stroke="#d9dce1" stroke-width="1.2"/><circle cx="471.7" cy="350.7" r="1.9" fill="#d6d9dd"/><circle cx="471.7" cy="350.1" r="1.9" fill="#a8acb4"/><circle cx="447.7" cy="347.4" r="1.6" fill="#d6d9dd"/><circle cx="447.7" cy="346.8" r="1.6" fill="#a8acb4"/><rect x="61.5" y="372.0" width="55.3" height="57.0" fill="#c1c4cb" stroke="#d9dce1" stroke-width="1.2"/><circle cx="76.8" cy="383.4" r="1.3" fill="#d6d9dd"/><circle cx="76.8" cy="382.8" r="1.3" fill="#a8acb4"/><circle cx="99.8" cy="381.4" r="1.9" fill="#d6d9dd"/><circle cx="99.8" cy="380.8" r="1.9" fill="#a8acb4"/><rect x="122.4" y="372.0" width="57.0" height="57.0" fill="#c1c4cb" stroke="#d9dce1" stroke-width="1.2"/><circle cx="173.7" cy="415.4" r="0.9" fill="#d6d9dd"/><circle cx="173.7" cy="414.8" r="0.9" fill="#a8acb4"/><circle cx="147.7" cy="400.8" r="1.1" fill="#d6d9dd"/><circle cx="147.7" cy="400.2" r="1.1" fill="#a8acb4"/><rect x="185.0" y="372.0" width="57.0" height="57.0" fill="#c1c4cb" stroke="#d9dce1" stroke-width="1.2"/><circle cx="206.8" cy="381.3" r="1.2" fill="#d6d9dd"/><circle cx="206.8" cy="380.7" r="1.2" fill="#a8acb4"/><circle cx="205.9" cy="398.2" r="1.6" fill="#d6d9dd"/><circle cx="205.9" cy="397.6" r="1.6" fill="#a8acb4"/><rect x="247.6" y="372.0" width="57.0" height="57.0" fill="#c1c4cb" stroke="#d9dce1" stroke-width="1.2"/><circle cx="268.2" cy="405.8" r="1.4" fill="#d6d9dd"/><circle cx="268.2" cy="405.2" r="1.4" fill="#a8acb4"/><circle cx="255.8" cy="422.4" r="1.7" fill="#d6d9dd"/><circle cx="255.8" cy="421.8" r="1.7" fill="#a8acb4"/><circle cx="298.0" cy="381.9" r="1.0" fill="#d6d9dd"/><circle cx="298.0" cy="381.3" r="1.0" fill="#a8acb4"/><circle cx="254.6" cy="412.9" r="1.1" fill="#d6d9dd"/><circle cx="254.6" cy="412.3" r="1.1" fill="#a8acb4"/><rect x="310.1" y="372.0" width="57.0" height="57.0" fill="#c1c4cb" stroke="#d9dce1" stroke-width="1.2"/><circle cx="353.5" cy="416.2" r="1.6" fill="#d6d9dd"/><circle cx="353.5" cy="415.6" r="1.6" fill="#a8acb4"/><circle cx="359.4" cy="395.8" r="1.4" fill="#d6d9dd"/><circle cx="359.4" cy="395.2" r="1.4" fill="#a8acb4"/><rect x="372.7" y="372.0" width="57.0" height="57.0" fill="#b4b7b9" stroke="#d9dce1" stroke-width="1.2"/><circle cx="410.6" cy="381.2" r="0.8" fill="#d6d9dd"/><circle cx="410.6" cy="380.6" r="0.8" fill="#a8acb4"/><circle cx="410.0" cy="396.7" r="0.8" fill="#d6d9dd"/><circle cx="410.0" cy="396.1" r="0.8" fill="#a8acb4"/><circle cx="421.6" cy="406.3" r="1.7" fill="#d6d9dd"/><circle cx="421.6" cy="405.7" r="1.7" fill="#a8acb4"/><circle cx="381.8" cy="416.5" r="0.8" fill="#d6d9dd"/><circle cx="381.8" cy="415.9" r="0.8" fill="#a8acb4"/><rect x="435.3" y="372.0" width="57.0" height="57.0" fill="#c1c4cb" stroke="#d9dce1" stroke-width="1.2"/><circle cx="461.7" cy="392.7" r="1.4" fill="#d6d9dd"/><circle cx="461.7" cy="392.1" r="1.4" fill="#a8acb4"/><rect x="61.5" y="434.0" width="55.3" height="58.8" fill="#afb2b8" stroke="#d9dce1" stroke-width="1.2"/><circle cx="94.0" cy="441.2" r="1.6" fill="#d6d9dd"/><circle cx="94.0" cy="440.6" r="1.6" fill="#a8acb4"/><circle cx="108.7" cy="485.4" r="1.0" fill="#d6d9dd"/><circle cx="108.7" cy="484.8" r="1.0" fill="#a8acb4"/><circle cx="73.4" cy="483.7" r="1.5" fill="#d6d9dd"/><circle cx="73.4" cy="483.1" r="1.5" fill="#a8acb4"/><rect x="122.4" y="434.0" width="57.0" height="58.8" fill="#c1c4cb" stroke="#d9dce1" stroke-width="1.2"/><circle cx="141.1" cy="463.0" r="0.9" fill="#d6d9dd"/><circle cx="141.1" cy="462.4" r="0.9" fill="#a8acb4"/><circle cx="143.8" cy="440.0" r="1.0" fill="#d6d9dd"/><circle cx="143.8" cy="439.4" r="1.0" fill="#a8acb4"/><rect x="185.0" y="434.0" width="57.0" height="58.8" fill="#c1c4cb" stroke="#d9dce1" stroke-width="1.2"/><circle cx="191.0" cy="463.3" r="2.0" fill="#d6d9dd"/><circle cx="191.0" cy="462.7" r="2.0" fill="#a8acb4"/><rect x="247.6" y="434.0" width="57.0" height="58.8" fill="#afb2b8" stroke="#d9dce1" stroke-width="1.2"/><circle cx="264.2" cy="460.5" r="1.6" fill="#d6d9dd"/><circle cx="264.2" cy="459.9" r="1.6" fill="#a8acb4"/><circle cx="283.0" cy="470.5" r="1.4" fill="#d6d9dd"/><circle cx="283.0" cy="469.9" r="1.4" fill="#a8acb4"/><circle cx="294.2" cy="485.5" r="1.1" fill="#d6d9dd"/><circle cx="294.2" cy="484.9" r="1.1" fill="#a8acb4"/><circle cx="262.8" cy="450.1" r="1.0" fill="#d6d9dd"/><circle cx="262.8" cy="449.5" r="1.0" fill="#a8acb4"/><rect x="310.1" y="434.0" width="57.0" height="58.8" fill="#c1c4cb" stroke="#d9dce1" stroke-width="1.2"/><circle cx="334.2" cy="455.7" r="0.8" fill="#d6d9dd"/><circle cx="334.2" cy="455.1" r="0.8" fill="#a8acb4"/><circle cx="321.4" cy="442.5" r="1.7" fill="#d6d9dd"/><circle cx="321.4" cy="441.9" r="1.7" fill="#a8acb4"/><rect x="372.7" y="434.0" width="57.0" height="58.8" fill="#c1c4cb" stroke="#d9dce1" stroke-width="1.2"/><circle cx="398.0" cy="441.7" r="1.6" fill="#d6d9dd"/><circle cx="398.0" cy="441.1" r="1.6" fill="#a8acb4"/><circle cx="395.7" cy="463.3" r="2.0" fill="#d6d9dd"/><circle cx="395.7" cy="462.7" r="2.0" fill="#a8acb4"/><circle cx="405.8" cy="472.2" r="0.8" fill="#d6d9dd"/><circle cx="405.8" cy="471.6" r="0.8" fill="#a8acb4"/><rect x="435.3" y="434.0" width="57.0" height="58.8" fill="#c1c4cb" stroke="#d9dce1" stroke-width="1.2"/><circle cx="447.9" cy="460.4" r="1.0" fill="#d6d9dd"/><circle cx="447.9" cy="459.8" r="1.0" fill="#a8acb4"/><circle cx="485.3" cy="485.6" r="1.4" fill="#d6d9dd"/><circle cx="485.3" cy="485.0" r="1.4" fill="#a8acb4"/><polygon points="0.0,0.0 57.0,0.0 47.0,7.0 7.0,7.0" fill="#687173"/><polygon points="57.0,0.0 57.0,56.5 47.0,47.5 47.0,7.0" fill="#4c5557"/><polygon points="57.0,56.5 0.0,56.5 7.0,47.5 47.0,47.5" fill="#545d5f"/><polygon points="0.0,56.5 0.0,0.0 7.0,7.0 7.0,47.5" fill="#5b6466"/><polygon points="7.0,7.0 47.0,7.0 47.0,47.5 7.0,47.5" fill="#5e6769" stroke="#93a0a0" stroke-width="1.1"/><path d="M0.0,0.0 L7.0,7.0 M57.0,0.0 L47.0,7.0 M57.0,56.5 L47.0,47.5 M0.0,56.5 L7.0,47.5" stroke="#93a0a0" stroke-width="0.9" opacity="0.8"/><polygon points="57.0,0.0 111.8,0.0 101.8,7.0 64.0,7.0" fill="#879494"/><polygon points="111.8,0.0 111.8,56.5 101.8,47.5 101.8,7.0" fill="#6b7878"/><polygon points="111.8,56.5 57.0,56.5 64.0,47.5 101.8,47.5" fill="#738080"/><polygon points="57.0,56.5 57.0,0.0 64.0,7.0 64.0,47.5" fill="#7a8787"/><polygon points="64.0,7.0 101.8,7.0 101.8,47.5 64.0,47.5" fill="#7d8a8a" stroke="#93a0a0" stroke-width="1.1"/><path d="M57.0,0.0 L64.0,7.0 M111.8,0.0 L101.8,7.0 M111.8,56.5 L101.8,47.5 M57.0,56.5 L64.0,47.5" stroke="#93a0a0" stroke-width="0.9" opacity="0.8"/><polygon points="111.8,0.0 166.5,0.0 156.5,7.0 118.8,7.0" fill="#687173"/><polygon points="166.5,0.0 166.5,56.5 156.5,47.5 156.5,7.0" fill="#4c5557"/><polygon points="166.5,56.5 111.8,56.5 118.8,47.5 156.5,47.5" fill="#545d5f"/><polygon points="111.8,56.5 111.8,0.0 118.8,7.0 118.8,47.5" fill="#5b6466"/><polygon points="118.8,7.0 156.5,7.0 156.5,47.5 118.8,47.5" fill="#5e6769" stroke="#93a0a0" stroke-width="1.1"/><path d="M111.8,0.0 L118.8,7.0 M166.5,0.0 L156.5,7.0 M166.5,56.5 L156.5,47.5 M111.8,56.5 L118.8,47.5" stroke="#93a0a0" stroke-width="0.9" opacity="0.8"/><polygon points="166.5,0.0 221.3,0.0 211.3,7.0 173.5,7.0" fill="#7f8c8c"/><polygon points="221.3,0.0 221.3,56.5 211.3,47.5 211.3,7.0" fill="#637070"/><polygon points="221.3,56.5 166.5,56.5 173.5,47.5 211.3,47.5" fill="#6b7878"/><polygon points="166.5,56.5 166.5,0.0 173.5,7.0 173.5,47.5" fill="#727f7f"/><polygon points="173.5,7.0 211.3,7.0 211.3,47.5 173.5,47.5" fill="#758282" stroke="#93a0a0" stroke-width="1.1"/><path d="M166.5,0.0 L173.5,7.0 M221.3,0.0 L211.3,7.0 M221.3,56.5 L211.3,47.5 M166.5,56.5 L173.5,47.5" stroke="#93a0a0" stroke-width="0.9" opacity="0.8"/><polygon points="221.3,0.0 276.1,0.0 266.1,7.0 228.3,7.0" fill="#879494"/><polygon points="276.1,0.0 276.1,56.5 266.1,47.5 266.1,7.0" fill="#6b7878"/><polygon points="276.1,56.5 221.3,56.5 228.3,47.5 266.1,47.5" fill="#738080"/><polygon points="221.3,56.5 221.3,0.0 228.3,7.0 228.3,47.5" fill="#7a8787"/><polygon points="228.3,7.0 266.1,7.0 266.1,47.5 228.3,47.5" fill="#7d8a8a" stroke="#93a0a0" stroke-width="1.1"/><path d="M221.3,0.0 L228.3,7.0 M276.1,0.0 L266.1,7.0 M276.1,56.5 L266.1,47.5 M221.3,56.5 L228.3,47.5" stroke="#93a0a0" stroke-width="0.9" opacity="0.8"/><polygon points="276.1,0.0 330.8,0.0 320.8,7.0 283.1,7.0" fill="#687173"/><polygon points="330.8,0.0 330.8,56.5 320.8,47.5 320.8,7.0" fill="#4c5557"/><polygon points="330.8,56.5 276.1,56.5 283.1,47.5 320.8,47.5" fill="#545d5f"/><polygon points="276.1,56.5 276.1,0.0 283.1,7.0 283.1,47.5" fill="#5b6466"/><polygon points="283.1,7.0 320.8,7.0 320.8,47.5 283.1,47.5" fill="#5e6769" stroke="#93a0a0" stroke-width="1.1"/><path d="M276.1,0.0 L283.1,7.0 M330.8,0.0 L320.8,7.0 M330.8,56.5 L320.8,47.5 M276.1,56.5 L283.1,47.5" stroke="#93a0a0" stroke-width="0.9" opacity="0.8"/><polygon points="330.8,0.0 385.6,0.0 375.6,7.0 337.8,7.0" fill="#778383"/><polygon points="385.6,0.0 385.6,56.5 375.6,47.5 375.6,7.0" fill="#5b6767"/><polygon points="385.6,56.5 330.8,56.5 337.8,47.5 375.6,47.5" fill="#636f6f"/><polygon points="330.8,56.5 330.8,0.0 337.8,7.0 337.8,47.5" fill="#6a7676"/><polygon points="337.8,7.0 375.6,7.0 375.6,47.5 337.8,47.5" fill="#6d7979" stroke="#93a0a0" stroke-width="1.1"/><path d="M330.8,0.0 L337.8,7.0 M385.6,0.0 L375.6,7.0 M385.6,56.5 L375.6,47.5 M330.8,56.5 L337.8,47.5" stroke="#93a0a0" stroke-width="0.9" opacity="0.8"/><polygon points="385.6,0.0 440.3,0.0 430.3,7.0 392.6,7.0" fill="#879494"/><polygon points="440.3,0.0 440.3,56.5 430.3,47.5 430.3,7.0" fill="#6b7878"/><polygon points="440.3,56.5 385.6,56.5 392.6,47.5 430.3,47.5" fill="#738080"/><polygon points="385.6,56.5 385.6,0.0 392.6,7.0 392.6,47.5" fill="#7a8787"/><polygon points="392.6,7.0 430.3,7.0 430.3,47.5 392.6,47.5" fill="#7d8a8a" stroke="#93a0a0" stroke-width="1.1"/><path d="M385.6,0.0 L392.6,7.0 M440.3,0.0 L430.3,7.0 M440.3,56.5 L430.3,47.5 M385.6,56.5 L392.6,47.5" stroke="#93a0a0" stroke-width="0.9" opacity="0.8"/><polygon points="440.3,0.0 495.1,0.0 485.1,7.0 447.3,7.0" fill="#879494"/><polygon points="495.1,0.0 495.1,56.5 485.1,47.5 485.1,7.0" fill="#6b7878"/><polygon points="495.1,56.5 440.3,56.5 447.3,47.5 485.1,47.5" fill="#738080"/><polygon points="440.3,56.5 440.3,0.0 447.3,7.0 447.3,47.5" fill="#7a8787"/><polygon points="447.3,7.0 485.1,7.0 485.1,47.5 447.3,47.5" fill="#7d8a8a" stroke="#93a0a0" stroke-width="1.1"/><path d="M440.3,0.0 L447.3,7.0 M495.1,0.0 L485.1,7.0 M495.1,56.5 L485.1,47.5 M440.3,56.5 L447.3,47.5" stroke="#93a0a0" stroke-width="0.9" opacity="0.8"/><polygon points="495.1,0.0 552.6,0.0 542.6,7.0 502.1,7.0" fill="#778383"/><polygon points="552.6,0.0 552.6,56.5 542.6,47.5 542.6,7.0" fill="#5b6767"/><polygon points="552.6,56.5 495.1,56.5 502.1,47.5 542.6,47.5" fill="#636f6f"/><polygon points="495.1,56.5 495.1,0.0 502.1,7.0 502.1,47.5" fill="#6a7676"/><polygon points="502.1,7.0 542.6,7.0 542.6,47.5 502.1,47.5" fill="#6d7979" stroke="#93a0a0" stroke-width="1.1"/><path d="M495.1,0.0 L502.1,7.0 M552.6,0.0 L542.6,7.0 M552.6,56.5 L542.6,47.5 M495.1,56.5 L502.1,47.5" stroke="#93a0a0" stroke-width="0.9" opacity="0.8"/><polygon points="0.0,494.3 57.0,494.3 45.7,500.9 7.3,500.9" fill="#687173"/><polygon points="57.0,494.3 57.0,550.6 45.7,542.3 45.7,500.9" fill="#4c5557"/><polygon points="57.0,550.6 0.0,550.6 7.3,542.3 45.7,542.3" fill="#545d5f"/><polygon points="0.0,550.6 0.0,494.3 7.3,500.9 7.3,542.3" fill="#5b6466"/><polygon points="7.3,500.9 45.7,500.9 45.7,542.3 7.3,542.3" fill="#5e6769" stroke="#93a0a0" stroke-width="1.1"/><path d="M0.0,494.3 L7.3,500.9 M57.0,494.3 L45.7,500.9 M57.0,550.6 L45.7,542.3 M0.0,550.6 L7.3,542.3" stroke="#93a0a0" stroke-width="0.9" opacity="0.8"/><polygon points="57.0,494.3 111.8,494.3 100.5,500.9 64.3,500.9" fill="#879494"/><polygon points="111.8,494.3 111.8,550.6 100.5,542.3 100.5,500.9" fill="#6b7878"/><polygon points="111.8,550.6 57.0,550.6 64.3,542.3 100.5,542.3" fill="#738080"/><polygon points="57.0,550.6 57.0,494.3 64.3,500.9 64.3,542.3" fill="#7a8787"/><polygon points="64.3,500.9 100.5,500.9 100.5,542.3 64.3,542.3" fill="#7d8a8a" stroke="#93a0a0" stroke-width="1.1"/><path d="M57.0,494.3 L64.3,500.9 M111.8,494.3 L100.5,500.9 M111.8,550.6 L100.5,542.3 M57.0,550.6 L64.3,542.3" stroke="#93a0a0" stroke-width="0.9" opacity="0.8"/><polygon points="111.8,494.3 166.5,494.3 155.2,500.9 119.1,500.9" fill="#7f8c8c"/><polygon points="166.5,494.3 166.5,550.6 155.2,542.3 155.2,500.9" fill="#637070"/><polygon points="166.5,550.6 111.8,550.6 119.1,542.3 155.2,542.3" fill="#6b7878"/><polygon points="111.8,550.6 111.8,494.3 119.1,500.9 119.1,542.3" fill="#727f7f"/><polygon points="119.1,500.9 155.2,500.9 155.2,542.3 119.1,542.3" fill="#758282" stroke="#93a0a0" stroke-width="1.1"/><path d="M111.8,494.3 L119.1,500.9 M166.5,494.3 L155.2,500.9 M166.5,550.6 L155.2,542.3 M111.8,550.6 L119.1,542.3" stroke="#93a0a0" stroke-width="0.9" opacity="0.8"/><polygon points="166.5,494.3 221.3,494.3 210.0,500.9 173.8,500.9" fill="#778383"/><polygon points="221.3,494.3 221.3,550.6 210.0,542.3 210.0,500.9" fill="#5b6767"/><polygon points="221.3,550.6 166.5,550.6 173.8,542.3 210.0,542.3" fill="#636f6f"/><polygon points="166.5,550.6 166.5,494.3 173.8,500.9 173.8,542.3" fill="#6a7676"/><polygon points="173.8,500.9 210.0,500.9 210.0,542.3 173.8,542.3" fill="#6d7979" stroke="#93a0a0" stroke-width="1.1"/><path d="M166.5,494.3 L173.8,500.9 M221.3,494.3 L210.0,500.9 M221.3,550.6 L210.0,542.3 M166.5,550.6 L173.8,542.3" stroke="#93a0a0" stroke-width="0.9" opacity="0.8"/><polygon points="221.3,494.3 276.1,494.3 264.8,500.9 228.6,500.9" fill="#687173"/><polygon points="276.1,494.3 276.1,550.6 264.8,542.3 264.8,500.9" fill="#4c5557"/><polygon points="276.1,550.6 221.3,550.6 228.6,542.3 264.8,542.3" fill="#545d5f"/><polygon points="221.3,550.6 221.3,494.3 228.6,500.9 228.6,542.3" fill="#5b6466"/><polygon points="228.6,500.9 264.8,500.9 264.8,542.3 228.6,542.3" fill="#5e6769" stroke="#93a0a0" stroke-width="1.1"/><path d="M221.3,494.3 L228.6,500.9 M276.1,494.3 L264.8,500.9 M276.1,550.6 L264.8,542.3 M221.3,550.6 L228.6,542.3" stroke="#93a0a0" stroke-width="0.9" opacity="0.8"/><polygon points="276.1,494.3 330.8,494.3 319.5,500.9 283.4,500.9" fill="#879494"/><polygon points="330.8,494.3 330.8,550.6 319.5,542.3 319.5,500.9" fill="#6b7878"/><polygon points="330.8,550.6 276.1,550.6 283.4,542.3 319.5,542.3" fill="#738080"/><polygon points="276.1,550.6 276.1,494.3 283.4,500.9 283.4,542.3" fill="#7a8787"/><polygon points="283.4,500.9 319.5,500.9 319.5,542.3 283.4,542.3" fill="#7d8a8a" stroke="#93a0a0" stroke-width="1.1"/><path d="M276.1,494.3 L283.4,500.9 M330.8,494.3 L319.5,500.9 M330.8,550.6 L319.5,542.3 M276.1,550.6 L283.4,542.3" stroke="#93a0a0" stroke-width="0.9" opacity="0.8"/><polygon points="330.8,494.3 385.6,494.3 374.3,500.9 338.1,500.9" fill="#7f8c8c"/><polygon points="385.6,494.3 385.6,550.6 374.3,542.3 374.3,500.9" fill="#637070"/><polygon points="385.6,550.6 330.8,550.6 338.1,542.3 374.3,542.3" fill="#6b7878"/><polygon points="330.8,550.6 330.8,494.3 338.1,500.9 338.1,542.3" fill="#727f7f"/><polygon points="338.1,500.9 374.3,500.9 374.3,542.3 338.1,542.3" fill="#758282" stroke="#93a0a0" stroke-width="1.1"/><path d="M330.8,494.3 L338.1,500.9 M385.6,494.3 L374.3,500.9 M385.6,550.6 L374.3,542.3 M330.8,550.6 L338.1,542.3" stroke="#93a0a0" stroke-width="0.9" opacity="0.8"/><polygon points="385.6,494.3 440.3,494.3 429.0,500.9 392.9,500.9" fill="#687173"/><polygon points="440.3,494.3 440.3,550.6 429.0,542.3 429.0,500.9" fill="#4c5557"/><polygon points="440.3,550.6 385.6,550.6 392.9,542.3 429.0,542.3" fill="#545d5f"/><polygon points="385.6,550.6 385.6,494.3 392.9,500.9 392.9,542.3" fill="#5b6466"/><polygon points="392.9,500.9 429.0,500.9 429.0,542.3 392.9,542.3" fill="#5e6769" stroke="#93a0a0" stroke-width="1.1"/><path d="M385.6,494.3 L392.9,500.9 M440.3,494.3 L429.0,500.9 M440.3,550.6 L429.0,542.3 M385.6,550.6 L392.9,542.3" stroke="#93a0a0" stroke-width="0.9" opacity="0.8"/><polygon points="440.3,494.3 495.1,494.3 483.8,500.9 447.6,500.9" fill="#879494"/><polygon points="495.1,494.3 495.1,550.6 483.8,542.3 483.8,500.9" fill="#6b7878"/><polygon points="495.1,550.6 440.3,550.6 447.6,542.3 483.8,542.3" fill="#738080"/><polygon points="440.3,550.6 440.3,494.3 447.6,500.9 447.6,542.3" fill="#7a8787"/><polygon points="447.6,500.9 483.8,500.9 483.8,542.3 447.6,542.3" fill="#7d8a8a" stroke="#93a0a0" stroke-width="1.1"/><path d="M440.3,494.3 L447.6,500.9 M495.1,494.3 L483.8,500.9 M495.1,550.6 L483.8,542.3 M440.3,550.6 L447.6,542.3" stroke="#93a0a0" stroke-width="0.9" opacity="0.8"/><polygon points="495.1,494.3 552.6,494.3 541.3,500.9 502.4,500.9" fill="#687173"/><polygon points="552.6,494.3 552.6,550.6 541.3,542.3 541.3,500.9" fill="#4c5557"/><polygon points="552.6,550.6 495.1,550.6 502.4,542.3 541.3,542.3" fill="#545d5f"/><polygon points="495.1,550.6 495.1,494.3 502.4,500.9 502.4,542.3" fill="#5b6466"/><polygon points="502.4,500.9 541.3,500.9 541.3,542.3 502.4,542.3" fill="#5e6769" stroke="#93a0a0" stroke-width="1.1"/><path d="M495.1,494.3 L502.4,500.9 M552.6,494.3 L541.3,500.9 M552.6,550.6 L541.3,542.3 M495.1,550.6 L502.4,542.3" stroke="#93a0a0" stroke-width="0.9" opacity="0.8"/><polygon points="0.0,56.5 57.0,56.5 50.0,64.5 11.5,64.5" fill="#778484"/><polygon points="57.0,56.5 57.0,111.2 50.0,103.2 50.0,64.5" fill="#8b9898"/><polygon points="57.0,111.2 0.0,111.2 11.5,103.2 50.0,103.2" fill="#798686"/><polygon points="0.0,111.2 0.0,56.5 11.5,64.5 11.5,103.2" fill="#6d7a7a"/><polygon points="11.5,64.5 50.0,64.5 50.0,103.2 11.5,103.2" fill="#7d8a8a" stroke="#93a0a0" stroke-width="1.1"/><path d="M0.0,56.5 L11.5,64.5 M57.0,56.5 L50.0,64.5 M57.0,111.2 L50.0,103.2 M0.0,111.2 L11.5,103.2" stroke="#93a0a0" stroke-width="0.9" opacity="0.8"/><polygon points="0.0,111.2 57.0,111.2 50.0,119.2 11.5,119.2" fill="#6f7c7c"/><polygon points="57.0,111.2 57.0,165.9 50.0,157.9 50.0,119.2" fill="#839090"/><polygon points="57.0,165.9 0.0,165.9 11.5,157.9 50.0,157.9" fill="#717e7e"/><polygon points="0.0,165.9 0.0,111.2 11.5,119.2 11.5,157.9" fill="#657272"/><polygon points="11.5,119.2 50.0,119.2 50.0,157.9 11.5,157.9" fill="#758282" stroke="#93a0a0" stroke-width="1.1"/><path d="M0.0,111.2 L11.5,119.2 M57.0,111.2 L50.0,119.2 M57.0,165.9 L50.0,157.9 M0.0,165.9 L11.5,157.9" stroke="#93a0a0" stroke-width="0.9" opacity="0.8"/><polygon points="0.0,165.9 57.0,165.9 50.0,173.9 11.5,173.9" fill="#586163"/><polygon points="57.0,165.9 57.0,220.7 50.0,212.7 50.0,173.9" fill="#6c7577"/><polygon points="57.0,220.7 0.0,220.7 11.5,212.7 50.0,212.7" fill="#5a6365"/><polygon points="0.0,220.7 0.0,165.9 11.5,173.9 11.5,212.7" fill="#4e5759"/><polygon points="11.5,173.9 50.0,173.9 50.0,212.7 11.5,212.7" fill="#5e6769" stroke="#93a0a0" stroke-width="1.1"/><path d="M0.0,165.9 L11.5,173.9 M57.0,165.9 L50.0,173.9 M57.0,220.7 L50.0,212.7 M0.0,220.7 L11.5,212.7" stroke="#93a0a0" stroke-width="0.9" opacity="0.8"/><polygon points="0.0,220.7 57.0,220.7 50.0,228.7 11.5,228.7" fill="#586163"/><polygon points="57.0,220.7 57.0,275.4 50.0,267.4 50.0,228.7" fill="#6c7577"/><polygon points="57.0,275.4 0.0,275.4 11.5,267.4 50.0,267.4" fill="#5a6365"/><polygon points="0.0,275.4 0.0,220.7 11.5,228.7 11.5,267.4" fill="#4e5759"/><polygon points="11.5,228.7 50.0,228.7 50.0,267.4 11.5,267.4" fill="#5e6769" stroke="#93a0a0" stroke-width="1.1"/><path d="M0.0,220.7 L11.5,228.7 M57.0,220.7 L50.0,228.7 M57.0,275.4 L50.0,267.4 M0.0,275.4 L11.5,267.4" stroke="#93a0a0" stroke-width="0.9" opacity="0.8"/><polygon points="0.0,275.4 57.0,275.4 50.0,283.4 11.5,283.4" fill="#778484"/><polygon points="57.0,275.4 57.0,330.1 50.0,322.1 50.0,283.4" fill="#8b9898"/><polygon points="57.0,330.1 0.0,330.1 11.5,322.1 50.0,322.1" fill="#798686"/><polygon points="0.0,330.1 0.0,275.4 11.5,283.4 11.5,322.1" fill="#6d7a7a"/><polygon points="11.5,283.4 50.0,283.4 50.0,322.1 11.5,322.1" fill="#7d8a8a" stroke="#93a0a0" stroke-width="1.1"/><path d="M0.0,275.4 L11.5,283.4 M57.0,275.4 L50.0,283.4 M57.0,330.1 L50.0,322.1 M0.0,330.1 L11.5,322.1" stroke="#93a0a0" stroke-width="0.9" opacity="0.8"/><polygon points="0.0,330.1 57.0,330.1 50.0,338.1 11.5,338.1" fill="#778484"/><polygon points="57.0,330.1 57.0,384.9 50.0,376.9 50.0,338.1" fill="#8b9898"/><polygon points="57.0,384.9 0.0,384.9 11.5,376.9 50.0,376.9" fill="#798686"/><polygon points="0.0,384.9 0.0,330.1 11.5,338.1 11.5,376.9" fill="#6d7a7a"/><polygon points="11.5,338.1 50.0,338.1 50.0,376.9 11.5,376.9" fill="#7d8a8a" stroke="#93a0a0" stroke-width="1.1"/><path d="M0.0,330.1 L11.5,338.1 M57.0,330.1 L50.0,338.1 M57.0,384.9 L50.0,376.9 M0.0,384.9 L11.5,376.9" stroke="#93a0a0" stroke-width="0.9" opacity="0.8"/><polygon points="0.0,384.9 57.0,384.9 50.0,392.9 11.5,392.9" fill="#586163"/><polygon points="57.0,384.9 57.0,439.6 50.0,431.6 50.0,392.9" fill="#6c7577"/><polygon points="57.0,439.6 0.0,439.6 11.5,431.6 50.0,431.6" fill="#5a6365"/><polygon points="0.0,439.6 0.0,384.9 11.5,392.9 11.5,431.6" fill="#4e5759"/><polygon points="11.5,392.9 50.0,392.9 50.0,431.6 11.5,431.6" fill="#5e6769" stroke="#93a0a0" stroke-width="1.1"/><path d="M0.0,384.9 L11.5,392.9 M57.0,384.9 L50.0,392.9 M57.0,439.6 L50.0,431.6 M0.0,439.6 L11.5,431.6" stroke="#93a0a0" stroke-width="0.9" opacity="0.8"/><polygon points="0.0,439.6 57.0,439.6 50.0,447.6 11.5,447.6" fill="#778484"/><polygon points="57.0,439.6 57.0,494.3 50.0,486.3 50.0,447.6" fill="#8b9898"/><polygon points="57.0,494.3 0.0,494.3 11.5,486.3 50.0,486.3" fill="#798686"/><polygon points="0.0,494.3 0.0,439.6 11.5,447.6 11.5,486.3" fill="#6d7a7a"/><polygon points="11.5,447.6 50.0,447.6 50.0,486.3 11.5,486.3" fill="#7d8a8a" stroke="#93a0a0" stroke-width="1.1"/><path d="M0.0,439.6 L11.5,447.6 M57.0,439.6 L50.0,447.6 M57.0,494.3 L50.0,486.3 M0.0,494.3 L11.5,486.3" stroke="#93a0a0" stroke-width="0.9" opacity="0.8"/><polygon points="495.1,56.5 552.6,56.5 540.6,64.0 502.1,64.0" fill="#758282"/><polygon points="552.6,56.5 552.6,111.2 540.6,101.2 540.6,64.0" fill="#6d7a7a"/><polygon points="552.6,111.2 495.1,111.2 502.1,101.2 540.6,101.2" fill="#798686"/><polygon points="495.1,111.2 495.1,56.5 502.1,64.0 502.1,101.2" fill="#8d9a9a"/><polygon points="502.1,64.0 540.6,64.0 540.6,101.2 502.1,101.2" fill="#7d8a8a" stroke="#93a0a0" stroke-width="1.1"/><path d="M495.1,56.5 L502.1,64.0 M552.6,56.5 L540.6,64.0 M552.6,111.2 L540.6,101.2 M495.1,111.2 L502.1,101.2" stroke="#93a0a0" stroke-width="0.9" opacity="0.8"/><polygon points="495.1,111.2 552.6,111.2 540.6,118.7 502.1,118.7" fill="#565f61"/><polygon points="552.6,111.2 552.6,165.9 540.6,155.9 540.6,118.7" fill="#4e5759"/><polygon points="552.6,165.9 495.1,165.9 502.1,155.9 540.6,155.9" fill="#5a6365"/><polygon points="495.1,165.9 495.1,111.2 502.1,118.7 502.1,155.9" fill="#6e7779"/><polygon points="502.1,118.7 540.6,118.7 540.6,155.9 502.1,155.9" fill="#5e6769" stroke="#93a0a0" stroke-width="1.1"/><path d="M495.1,111.2 L502.1,118.7 M552.6,111.2 L540.6,118.7 M552.6,165.9 L540.6,155.9 M495.1,165.9 L502.1,155.9" stroke="#93a0a0" stroke-width="0.9" opacity="0.8"/><polygon points="495.1,165.9 552.6,165.9 540.6,173.4 502.1,173.4" fill="#6d7a7a"/><polygon points="552.6,165.9 552.6,220.7 540.6,210.7 540.6,173.4" fill="#657272"/><polygon points="552.6,220.7 495.1,220.7 502.1,210.7 540.6,210.7" fill="#717e7e"/><polygon points="495.1,220.7 495.1,165.9 502.1,173.4 502.1,210.7" fill="#859292"/><polygon points="502.1,173.4 540.6,173.4 540.6,210.7 502.1,210.7" fill="#758282" stroke="#93a0a0" stroke-width="1.1"/><path d="M495.1,165.9 L502.1,173.4 M552.6,165.9 L540.6,173.4 M552.6,220.7 L540.6,210.7 M495.1,220.7 L502.1,210.7" stroke="#93a0a0" stroke-width="0.9" opacity="0.8"/><polygon points="495.1,220.7 552.6,220.7 540.6,228.2 502.1,228.2" fill="#758282"/><polygon points="552.6,220.7 552.6,275.4 540.6,265.4 540.6,228.2" fill="#6d7a7a"/><polygon points="552.6,275.4 495.1,275.4 502.1,265.4 540.6,265.4" fill="#798686"/><polygon points="495.1,275.4 495.1,220.7 502.1,228.2 502.1,265.4" fill="#8d9a9a"/><polygon points="502.1,228.2 540.6,228.2 540.6,265.4 502.1,265.4" fill="#7d8a8a" stroke="#93a0a0" stroke-width="1.1"/><path d="M495.1,220.7 L502.1,228.2 M552.6,220.7 L540.6,228.2 M552.6,275.4 L540.6,265.4 M495.1,275.4 L502.1,265.4" stroke="#93a0a0" stroke-width="0.9" opacity="0.8"/><polygon points="495.1,275.4 552.6,275.4 540.6,282.9 502.1,282.9" fill="#565f61"/><polygon points="552.6,275.4 552.6,330.1 540.6,320.1 540.6,282.9" fill="#4e5759"/><polygon points="552.6,330.1 495.1,330.1 502.1,320.1 540.6,320.1" fill="#5a6365"/><polygon points="495.1,330.1 495.1,275.4 502.1,282.9 502.1,320.1" fill="#6e7779"/><polygon points="502.1,282.9 540.6,282.9 540.6,320.1 502.1,320.1" fill="#5e6769" stroke="#93a0a0" stroke-width="1.1"/><path d="M495.1,275.4 L502.1,282.9 M552.6,275.4 L540.6,282.9 M552.6,330.1 L540.6,320.1 M495.1,330.1 L502.1,320.1" stroke="#93a0a0" stroke-width="0.9" opacity="0.8"/><polygon points="495.1,330.1 552.6,330.1 540.6,337.6 502.1,337.6" fill="#657171"/><polygon points="552.6,330.1 552.6,384.9 540.6,374.9 540.6,337.6" fill="#5d6969"/><polygon points="552.6,384.9 495.1,384.9 502.1,374.9 540.6,374.9" fill="#697575"/><polygon points="495.1,384.9 495.1,330.1 502.1,337.6 502.1,374.9" fill="#7d8989"/><polygon points="502.1,337.6 540.6,337.6 540.6,374.9 502.1,374.9" fill="#6d7979" stroke="#93a0a0" stroke-width="1.1"/><path d="M495.1,330.1 L502.1,337.6 M552.6,330.1 L540.6,337.6 M552.6,384.9 L540.6,374.9 M495.1,384.9 L502.1,374.9" stroke="#93a0a0" stroke-width="0.9" opacity="0.8"/><polygon points="495.1,384.9 552.6,384.9 540.6,392.4 502.1,392.4" fill="#6d7a7a"/><polygon points="552.6,384.9 552.6,439.6 540.6,429.6 540.6,392.4" fill="#657272"/><polygon points="552.6,439.6 495.1,439.6 502.1,429.6 540.6,429.6" fill="#717e7e"/><polygon points="495.1,439.6 495.1,384.9 502.1,392.4 502.1,429.6" fill="#859292"/><polygon points="502.1,392.4 540.6,392.4 540.6,429.6 502.1,429.6" fill="#758282" stroke="#93a0a0" stroke-width="1.1"/><path d="M495.1,384.9 L502.1,392.4 M552.6,384.9 L540.6,392.4 M552.6,439.6 L540.6,429.6 M495.1,439.6 L502.1,429.6" stroke="#93a0a0" stroke-width="0.9" opacity="0.8"/><polygon points="495.1,439.6 552.6,439.6 540.6,447.1 502.1,447.1" fill="#758282"/><polygon points="552.6,439.6 552.6,494.3 540.6,484.3 540.6,447.1" fill="#6d7a7a"/><polygon points="552.6,494.3 495.1,494.3 502.1,484.3 540.6,484.3" fill="#798686"/><polygon points="495.1,494.3 495.1,439.6 502.1,447.1 502.1,484.3" fill="#8d9a9a"/><polygon points="502.1,447.1 540.6,447.1 540.6,484.3 502.1,484.3" fill="#7d8a8a" stroke="#93a0a0" stroke-width="1.1"/><path d="M495.1,439.6 L502.1,447.1 M552.6,439.6 L540.6,447.1 M552.6,494.3 L540.6,484.3 M495.1,494.3 L502.1,484.3" stroke="#93a0a0" stroke-width="0.9" opacity="0.8"/><defs><radialGradient id="ug1" cx="0.38" cy="0.32" r="0.75"><stop offset="0" stop-color="#5b9bd0"/><stop offset="0.6" stop-color="#3a6fa3"/><stop offset="1" stop-color="#25507e"/></radialGradient></defs><circle cx="468.5" cy="468" r="27.5" fill="url(#ug1)" stroke="#1f3d60" stroke-width="1.38"/><path d="M473.0 447.0 A21.4 21.4 0 0 1 484.4 453.6" fill="none" stroke="#6d9fd0" stroke-width="3.02" stroke-linecap="round" opacity="0.75"/><path d="M484.4 482.4 A21.4 21.4 0 0 1 473.0 489.0" fill="none" stroke="#6d9fd0" stroke-width="3.02" stroke-linecap="round" opacity="0.75"/><path d="M448.1 474.6 A21.4 21.4 0 0 1 448.1 461.4" fill="none" stroke="#6d9fd0" stroke-width="3.02" stroke-linecap="round" opacity="0.75"/><circle cx="468.5" cy="468" r="12.65" fill="#1b4a72"/><circle cx="468.5" cy="468" r="11.0" fill="#00eeee"/><circle cx="465.1" cy="448.5" r="3.9" fill="#f07b2a" stroke="#7a3a10" stroke-width="0.82"/><circle cx="487.6" cy="473.1" r="3.9" fill="#f07b2a" stroke="#7a3a10" stroke-width="0.82"/><circle cx="453.3" cy="480.7" r="3.9" fill="#f07b2a" stroke="#7a3a10" stroke-width="0.82"/><g transform="translate(469.0,468) scale(0.82)"><rect x="-7" y="-3" width="11" height="8" rx="2" fill="#fff"/><circle cx="-3" cy="-5" r="3.2" fill="#fff"/><circle cx="2" cy="-4.5" r="2.6" fill="#fff"/><path d="M4 -1 L9 -4 L9 5 L4 2 Z" fill="#fff"/></g></g><line x1="92.5" y1="0" x2="92.5" y2="665" stroke="rgba(150,150,150,0.36)" stroke-width="1"/><line x1="266.5" y1="0" x2="266.5" y2="665" stroke="rgba(150,150,150,0.36)" stroke-width="1"/><line x1="440.5" y1="0" x2="440.5" y2="665" stroke="rgba(150,150,150,0.36)" stroke-width="1"/><line x1="614.5" y1="0" x2="614.5" y2="665" stroke="rgba(150,150,150,0.36)" stroke-width="1"/><line x1="788.5" y1="0" x2="788.5" y2="665" stroke="rgba(150,150,150,0.36)" stroke-width="1"/><line x1="962.5" y1="0" x2="962.5" y2="665" stroke="rgba(150,150,150,0.36)" stroke-width="1"/><line x1="0" y1="134.3" x2="1121" y2="134.3" stroke="rgba(150,150,150,0.36)" stroke-width="1"/><line x1="0" y1="308" x2="1121" y2="308" stroke="rgba(150,150,150,0.36)" stroke-width="1"/><line x1="0" y1="482" x2="1121" y2="482" stroke="rgba(150,150,150,0.36)" stroke-width="1"/><line x1="0" y1="656" x2="1121" y2="656" stroke="rgba(150,150,150,0.36)" stroke-width="1"/><path d="M311.5 665 L311.5 212.5 M659 212.5 L952.4000000000001 212.5 L952.4000000000001 665" fill="none" stroke="rgba(220,220,220,0.75)" stroke-width="1.2"/></svg></div>
<div class="a" style="left:1698px;top:145px;width:6px;height:1444px;background:linear-gradient(90deg,#7a7a7a,#6a6a6a,#7e7e7e)"></div>
<div class="tab" style="left:584px;top:845px;width:123px;height:24px"></div>
<svg class="a" style="left:597px;top:848px" width="15" height="15" viewBox="0 0 15 15"><path d="M13.5 4 A6.5 6.5 0 1 0 13.5 11 L8 7.5 Z" fill="#222"/></svg>
<div class="t" style="left:616px;top:849.4px;font-size:17.2px;color:#000;font-weight:normal;transform:scaleX(1.08);transform-origin:0 0;">Game</div>
<svg class="a" style="left:1673px;top:858px" width="21" height="8"><path d="M0 1.5 L6 1.5 L3 4.5 Z" fill="#333"/><rect x="8" y="0" width="12" height="1.4" fill="#333"/><rect x="8" y="2.8" width="12" height="1.4" fill="#333"/><rect x="8" y="5.6" width="12" height="1.4" fill="#333"/></svg>
<div class="tbar" style="left:582px;top:869px;width:1116px;height:25px"></div>
<div class="sep" style="left:590px;top:870px;height:23px"></div>
<div class="t" style="left:597.5px;top:873.8px;font-size:14.3px;color:#111;font-weight:normal;transform:scaleX(1.06);transform-origin:0 0;">Display 1</div>
<svg class="a" style="left:696px;top:875px" width="8" height="13"><path d="M0.5 5 L4 0.5 L7.5 5 Z M0.5 8 L4 12.5 L7.5 8 Z" fill="#333"/></svg>
<div class="sep" style="left:709px;top:870px;height:23px"></div><div class="sep" style="left:718px;top:870px;height:23px"></div>
<div class="t" style="left:726px;top:873.8px;font-size:14.3px;color:#111;font-weight:normal;transform:scaleX(1.06);transform-origin:0 0;">Free Aspect</div>
<svg class="a" style="left:945px;top:875px" width="8" height="13"><path d="M0.5 5 L4 0.5 L7.5 5 Z M0.5 8 L4 12.5 L7.5 8 Z" fill="#333"/></svg>
<div class="sep" style="left:958px;top:870px;height:23px"></div>
<div class="t" style="left:967px;top:875.3px;font-size:14.3px;color:#111;font-weight:normal;transform:scaleX(1.06);transform-origin:0 0;">Scale</div>
<div class="a" style="left:1013px;top:880.5px;width:225px;height:6px;border-radius:3px;background:linear-gradient(#5e5e5e,#8a8a8a);border:1px solid #5a5a5a"></div>
<div class="a" style="left:1011px;top:876.5px;width:14px;height:14px;border-radius:7px;background:linear-gradient(#e0e0e0,#b0b0b0);border:1.5px solid #555"></div>
<div class="t" style="left:1246px;top:875.8px;font-size:14.3px;color:#111;font-weight:normal;transform:scaleX(1.06);transform-origin:0 0;">1.5x</div>
<div class="sep" style="left:1323px;top:870px;height:23px"></div>
<div class="sep" style="left:1458px;top:870px;height:23px"></div>
<div class="sep" style="left:1551px;top:870px;height:23px"></div>
<div class="sep" style="left:1605px;top:870px;height:23px"></div>
<div class="sep" style="left:1672px;top:870px;height:23px"></div>
<div class="sep" style="left:1690px;top:870px;height:23px"></div>
<div class="t" style="left:1330px;top:873.8px;font-size:14.3px;color:#111;font-weight:normal;transform:scaleX(1.06);transform-origin:0 0;">Maximize On Play</div>
<div class="t" style="left:1464px;top:873.8px;font-size:14.3px;color:#111;font-weight:normal;transform:scaleX(1.06);transform-origin:0 0;">Mute Audio</div>
<div class="t" style="left:1559px;top:873.8px;font-size:14.3px;color:#111;font-weight:normal;transform:scaleX(1.06);transform-origin:0 0;">Stats</div>
<div class="t" style="left:1614px;top:873.8px;font-size:14.3px;color:#111;font-weight:normal;transform:scaleX(1.06);transform-origin:0 0;">Gizmos</div>
<svg class="a" style="left:1676px;top:878px" width="8" height="6"><path d="M0 0 L7 0 L3.5 5 Z" fill="#333"/></svg>
<div class="a" style="left:582px;top:894px;width:1116px;height:695px;background:#1f1f1f;overflow:hidden" id="game"><svg width="1116" height="695" style="position:absolute;left:0;top:0"><g transform="translate(-254,-317.1) scale(1.7357,1.744)"><rect x="0" y="0" width="552.6" height="550.6" fill="#6b7878"/><defs><linearGradient id="vg" x1="0" y1="0" x2="1" y2="0"><stop offset="0" stop-color="#939ea9"/><stop offset="1" stop-color="#737e8a"/></linearGradient></defs><rect x="57" y="56.5" width="438.1" height="437.8" fill="#8591a0"/><rect x="54.2" y="56.5" width="5.6" height="437.8" fill="url(#vg)"/><rect x="116.8" y="56.5" width="5.6" height="437.8" fill="url(#vg)"/><rect x="179.4" y="56.5" width="5.6" height="437.8" fill="url(#vg)"/><rect x="242.0" y="56.5" width="5.6" height="437.8" fill="url(#vg)"/><rect x="304.5" y="56.5" width="5.6" height="437.8" fill="url(#vg)"/><rect x="367.1" y="56.5" width="5.6" height="437.8" fill="url(#vg)"/><rect x="429.7" y="56.5" width="5.6" height="437.8" fill="url(#vg)"/><rect x="492.3" y="56.5" width="5.6" height="437.8" fill="url(#vg)"/><rect x="57" y="117.6" width="438.1" height="2.7" fill="#626c78"/><rect x="57" y="120.3" width="438.1" height="2.3" fill="#a2aab4"/><rect x="57" y="180.2" width="438.1" height="2.7" fill="#626c78"/><rect x="57" y="182.9" width="438.1" height="2.3" fill="#a2aab4"/><rect x="57" y="242.8" width="438.1" height="2.7" fill="#626c78"/><rect x="57" y="245.5" width="438.1" height="2.3" fill="#a2aab4"/><rect x="57" y="305.3" width="438.1" height="2.7" fill="#626c78"/><rect x="57" y="308.0" width="438.1" height="2.3" fill="#a2aab4"/><rect x="57" y="367.9" width="438.1" height="2.7" fill="#626c78"/><rect x="57" y="370.6" width="438.1" height="2.3" fill="#a2aab4"/><rect x="57" y="430.5" width="438.1" height="2.7" fill="#626c78"/><rect x="57" y="433.2" width="438.1" height="2.3" fill="#a2aab4"/><rect x="57" y="491.3" width="438.1" height="3" fill="#626c78"/><rect x="61.5" y="57.7" width="55.3" height="59.9" fill="#c1c4cb" stroke="#d9dce1" stroke-width="1.2"/><circle cx="109.2" cy="83.5" r="0.8" fill="#d6d9dd"/><circle cx="109.2" cy="82.9" r="0.8" fill="#a8acb4"/><circle cx="103.3" cy="69.5" r="1.5" fill="#d6d9dd"/><circle cx="103.3" cy="68.9" r="1.5" fill="#a8acb4"/><circle cx="107.4" cy="75.1" r="0.8" fill="#d6d9dd"/><circle cx="107.4" cy="74.5" r="0.8" fill="#a8acb4"/><rect x="122.4" y="57.7" width="57.0" height="59.9" fill="#c1c4cb" stroke="#d9dce1" stroke-width="1.2"/><circle cx="130.8" cy="69.3" r="1.3" fill="#d6d9dd"/><circle cx="130.8" cy="68.7" r="1.3" fill="#a8acb4"/><circle cx="166.1" cy="70.9" r="1.0" fill="#d6d9dd"/><circle cx="166.1" cy="70.3" r="1.0" fill="#a8acb4"/><circle cx="156.8" cy="109.2" r="1.5" fill="#d6d9dd"/><circle cx="156.8" cy="108.6" r="1.5" fill="#a8acb4"/><circle cx="146.1" cy="110.6" r="0.8" fill="#d6d9dd"/><circle cx="146.1" cy="110.0" r="0.8" fill="#a8acb4"/><rect x="185.0" y="57.7" width="57.0" height="59.9" fill="#afb2b8" stroke="#d9dce1" stroke-width="1.2"/><circle cx="203.7" cy="71.8" r="0.9" fill="#d6d9dd"/><circle cx="203.7" cy="71.2" r="0.9" fill="#a8acb4"/><circle cx="204.5" cy="103.1" r="0.9" fill="#d6d9dd"/><circle cx="204.5" cy="102.5" r="0.9" fill="#a8acb4"/><rect x="247.6" y="57.7" width="57.0" height="59.9" fill="#afb2b8" stroke="#d9dce1" stroke-width="1.2"/><circle cx="270.1" cy="90.6" r="0.8" fill="#d6d9dd"/><circle cx="270.1" cy="90.0" r="0.8" fill="#a8acb4"/><circle cx="255.5" cy="74.7" r="1.6" fill="#d6d9dd"/><circle cx="255.5" cy="74.1" r="1.6" fill="#a8acb4"/><rect x="310.1" y="57.7" width="57.0" height="59.9" fill="#c1c4cb" stroke="#d9dce1" stroke-width="1.2"/><circle cx="351.6" cy="86.8" r="1.9" fill="#d6d9dd"/><circle cx="351.6" cy="86.2" r="1.9" fill="#a8acb4"/><circle cx="332.2" cy="76.7" r="0.9" fill="#d6d9dd"/><circle cx="332.2" cy="76.1" r="0.9" fill="#a8acb4"/><circle cx="351.7" cy="68.9" r="1.1" fill="#d6d9dd"/><circle cx="351.7" cy="68.3" r="1.1" fill="#a8acb4"/><circle cx="338.4" cy="81.1" r="1.3" fill="#d6d9dd"/><circle cx="338.4" cy="80.5" r="1.3" fill="#a8acb4"/><rect x="372.7" y="57.7" width="57.0" height="59.9" fill="#c1c4cb" stroke="#d9dce1" stroke-width="1.2"/><circle cx="383.4" cy="84.6" r="1.7" fill="#d6d9dd"/><circle cx="383.4" cy="84.0" r="1.7" fill="#a8acb4"/><rect x="435.3" y="57.7" width="57.0" height="59.9" fill="#c1c4cb" stroke="#d9dce1" stroke-width="1.2"/><circle cx="484.0" cy="84.7" r="2.0" fill="#d6d9dd"/><circle cx="484.0" cy="84.1" r="2.0" fill="#a8acb4"/><circle cx="444.1" cy="91.1" r="1.7" fill="#d6d9dd"/><circle cx="444.1" cy="90.5" r="1.7" fill="#a8acb4"/><rect x="61.5" y="122.6" width="55.3" height="57.6" fill="#c1c4cb" stroke="#d9dce1" stroke-width="1.2"/><circle cx="80.8" cy="144.0" r="1.3" fill="#d6d9dd"/><circle cx="80.8" cy="143.4" r="1.3" fill="#a8acb4"/><circle cx="102.1" cy="130.9" r="0.8" fill="#d6d9dd"/><circle cx="102.1" cy="130.3" r="0.8" fill="#a8acb4"/><circle cx="77.6" cy="160.2" r="0.8" fill="#d6d9dd"/><circle cx="77.6" cy="159.6" r="0.8" fill="#a8acb4"/><rect x="122.4" y="122.6" width="57.0" height="57.6" fill="#c1c4cb" stroke="#d9dce1" stroke-width="1.2"/><circle cx="157.7" cy="173.9" r="1.8" fill="#d6d9dd"/><circle cx="157.7" cy="173.3" r="1.8" fill="#a8acb4"/><circle cx="140.8" cy="145.7" r="1.6" fill="#d6d9dd"/><circle cx="140.8" cy="145.1" r="1.6" fill="#a8acb4"/><circle cx="128.6" cy="149.2" r="0.9" fill="#d6d9dd"/><circle cx="128.6" cy="148.6" r="0.9" fill="#a8acb4"/><rect x="185.0" y="122.6" width="57.0" height="57.6" fill="#c1c4cb" stroke="#d9dce1" stroke-width="1.2"/><circle cx="213.2" cy="137.9" r="1.1" fill="#d6d9dd"/><circle cx="213.2" cy="137.3" r="1.1" fill="#a8acb4"/><rect x="247.6" y="122.6" width="57.0" height="57.6" fill="#c1c4cb" stroke="#d9dce1" stroke-width="1.2"/><circle cx="271.3" cy="170.4" r="1.3" fill="#d6d9dd"/><circle cx="271.3" cy="169.8" r="1.3" fill="#a8acb4"/><circle cx="260.5" cy="146.4" r="1.1" fill="#d6d9dd"/><circle cx="260.5" cy="145.8" r="1.1" fill="#a8acb4"/><rect x="310.1" y="122.6" width="57.0" height="57.6" fill="#c1c4cb" stroke="#d9dce1" stroke-width="1.2"/><circle cx="353.5" cy="167.9" r="1.1" fill="#d6d9dd"/><circle cx="353.5" cy="167.3" r="1.1" fill="#a8acb4"/><circle cx="334.7" cy="144.4" r="1.8" fill="#d6d9dd"/><circle cx="334.7" cy="143.8" r="1.8" fill="#a8acb4"/><rect x="372.7" y="122.6" width="57.0" height="57.6" fill="#b4b7b9" stroke="#d9dce1" stroke-width="1.2"/><circle cx="385.0" cy="135.9" r="1.0" fill="#d6d9dd"/><circle cx="385.0" cy="135.3" r="1.0" fill="#a8acb4"/><circle cx="388.8" cy="150.3" r="1.5" fill="#d6d9dd"/><circle cx="388.8" cy="149.7" r="1.5" fill="#a8acb4"/><rect x="435.3" y="122.6" width="57.0" height="57.6" fill="#c1c4cb" stroke="#d9dce1" stroke-width="1.2"/><circle cx="453.6" cy="134.5" r="1.4" fill="#d6d9dd"/><circle cx="453.6" cy="133.9" r="1.4" fill="#a8acb4"/><circle cx="468.9" cy="142.5" r="0.9" fill="#d6d9dd"/><circle cx="468.9" cy="141.9" r="0.9" fill="#a8acb4"/><circle cx="480.5" cy="172.0" r="1.6" fill="#d6d9dd"/><circle cx="480.5" cy="171.4" r="1.6" fill="#a8acb4"/><rect x="61.5" y="185.2" width="55.3" height="57.6" fill="#afb2b8" stroke="#d9dce1" stroke-width="1.2"/><circle cx="86.3" cy="230.8" r="1.9" fill="#d6d9dd"/><circle cx="86.3" cy="230.2" r="1.9" fill="#a8acb4"/><rect x="122.4" y="185.2" width="57.0" height="57.6" fill="#c1c4cb" stroke="#d9dce1" stroke-width="1.2"/><circle cx="146.1" cy="208.6" r="1.3" fill="#d6d9dd"/><circle cx="146.1" cy="208.0" r="1.3" fill="#a8acb4"/><circle cx="146.2" cy="199.2" r="2.0" fill="#d6d9dd"/><circle cx="146.2" cy="198.6" r="2.0" fill="#a8acb4"/><circle cx="148.1" cy="195.4" r="1.5" fill="#d6d9dd"/><circle cx="148.1" cy="194.8" r="1.5" fill="#a8acb4"/><circle cx="132.4" cy="216.7" r="1.4" fill="#d6d9dd"/><circle cx="132.4" cy="216.1" r="1.4" fill="#a8acb4"/><rect x="185.0" y="185.2" width="57.0" height="57.6" fill="#c1c4cb" stroke="#d9dce1" stroke-width="1.2"/><circle cx="218.8" cy="193.5" r="1.0" fill="#d6d9dd"/><circle cx="218.8" cy="192.9" r="1.0" fill="#a8acb4"/><circle cx="207.7" cy="219.8" r="1.9" fill="#d6d9dd"/><circle cx="207.7" cy="219.2" r="1.9" fill="#a8acb4"/><circle cx="218.2" cy="212.4" r="0.8" fill="#d6d9dd"/><circle cx="218.2" cy="211.8" r="0.8" fill="#a8acb4"/><rect x="247.6" y="185.2" width="57.0" height="57.6" fill="#afb2b8" stroke="#d9dce1" stroke-width="1.2"/><circle cx="299.0" cy="212.0" r="1.3" fill="#d6d9dd"/><circle cx="299.0" cy="211.4" r="1.3" fill="#a8acb4"/><circle cx="256.8" cy="195.0" r="1.1" fill="#d6d9dd"/><circle cx="256.8" cy="194.4" r="1.1" fill="#a8acb4"/><circle cx="265.1" cy="228.9" r="0.9" fill="#d6d9dd"/><circle cx="265.1" cy="228.3" r="0.9" fill="#a8acb4"/><circle cx="253.8" cy="234.6" r="1.4" fill="#d6d9dd"/><circle cx="253.8" cy="234.0" r="1.4" fill="#a8acb4"/><rect x="310.1" y="185.2" width="57.0" height="57.6" fill="#c1c4cb" stroke="#d9dce1" stroke-width="1.2"/><circle cx="347.5" cy="232.9" r="1.7" fill="#d6d9dd"/><circle cx="347.5" cy="232.3" r="1.7" fill="#a8acb4"/><circle cx="329.2" cy="220.2" r="0.8" fill="#d6d9dd"/><circle cx="329.2" cy="219.6" r="0.8" fill="#a8acb4"/><rect x="372.7" y="185.2" width="57.0" height="57.6" fill="#c1c4cb" stroke="#d9dce1" stroke-width="1.2"/><circle cx="402.1" cy="232.6" r="1.2" fill="#d6d9dd"/><circle cx="402.1" cy="232.0" r="1.2" fill="#a8acb4"/><circle cx="388.3" cy="215.5" r="1.4" fill="#d6d9dd"/><circle cx="388.3" cy="214.9" r="1.4" fill="#a8acb4"/><circle cx="407.6" cy="218.8" r="1.7" fill="#d6d9dd"/><circle cx="407.6" cy="218.2" r="1.7" fill="#a8acb4"/><rect x="435.3" y="185.2" width="57.0" height="57.6" fill="#afb2b8" stroke="#d9dce1" stroke-width="1.2"/><circle cx="478.1" cy="228.4" r="1.7" fill="#d6d9dd"/><circle cx="478.1" cy="227.8" r="1.7" fill="#a8acb4"/><circle cx="451.1" cy="214.4" r="1.2" fill="#d6d9dd"/><circle cx="451.1" cy="213.8" r="1.2" fill="#a8acb4"/><rect x="61.5" y="247.8" width="55.3" height="57.6" fill="#c1c4cb" stroke="#d9dce1" stroke-width="1.2"/><circle cx="111.1" cy="289.7" r="1.3" fill="#d6d9dd"/><circle cx="111.1" cy="289.1" r="1.3" fill="#a8acb4"/><rect x="122.4" y="247.8" width="57.0" height="57.6" fill="#c1c4cb" stroke="#d9dce1" stroke-width="1.2"/><circle cx="159.8" cy="297.4" r="1.3" fill="#d6d9dd"/><circle cx="159.8" cy="296.8" r="1.3" fill="#a8acb4"/><circle cx="171.2" cy="298.9" r="1.9" fill="#d6d9dd"/><circle cx="171.2" cy="298.3" r="1.9" fill="#a8acb4"/><rect x="185.0" y="247.8" width="57.0" height="57.6" fill="#b4b7b9" stroke="#d9dce1" stroke-width="1.2"/><circle cx="193.9" cy="257.6" r="1.3" fill="#d6d9dd"/><circle cx="193.9" cy="257.0" r="1.3" fill="#a8acb4"/><circle cx="205.9" cy="275.3" r="2.0" fill="#d6d9dd"/><circle cx="205.9" cy="274.7" r="2.0" fill="#a8acb4"/><circle cx="218.6" cy="252.9" r="1.9" fill="#d6d9dd"/><circle cx="218.6" cy="252.3" r="1.9" fill="#a8acb4"/><rect x="247.6" y="247.8" width="57.0" height="57.6" fill="#c1c4cb" stroke="#d9dce1" stroke-width="1.2"/><circle cx="290.0" cy="256.8" r="1.6" fill="#d6d9dd"/><circle cx="290.0" cy="256.2" r="1.6" fill="#a8acb4"/><circle cx="295.1" cy="289.3" r="1.7" fill="#d6d9dd"/><circle cx="295.1" cy="288.7" r="1.7" fill="#a8acb4"/><circle cx="275.0" cy="261.2" r="1.7" fill="#d6d9dd"/><circle cx="275.0" cy="260.6" r="1.7" fill="#a8acb4"/><rect x="310.1" y="247.8" width="57.0" height="57.6" fill="#c1c4cb" stroke="#d9dce1" stroke-width="1.2"/><circle cx="319.4" cy="296.9" r="1.6" fill="#d6d9dd"/><circle cx="319.4" cy="296.3" r="1.6" fill="#a8acb4"/><circle cx="336.9" cy="287.5" r="0.8" fill="#d6d9dd"/><circle cx="336.9" cy="286.9" r="0.8" fill="#a8acb4"/><circle cx="322.7" cy="299.1" r="0.7" fill="#d6d9dd"/><circle cx="322.7" cy="298.5" r="0.7" fill="#a8acb4"/><rect x="372.7" y="247.8" width="57.0" height="57.6" fill="#b4b7b9" stroke="#d9dce1" stroke-width="1.2"/><circle cx="415.5" cy="259.7" r="1.8" fill="#d6d9dd"/><circle cx="415.5" cy="259.1" r="1.8" fill="#a8acb4"/><circle cx="423.6" cy="283.5" r="1.2" fill="#d6d9dd"/><circle cx="423.6" cy="282.9" r="1.2" fill="#a8acb4"/><circle cx="403.5" cy="259.0" r="0.7" fill="#d6d9dd"/><circle cx="403.5" cy="258.4" r="0.7" fill="#a8acb4"/><circle cx="423.2" cy="283.1" r="1.4" fill="#d6d9dd"/><circle cx="423.2" cy="282.5" r="1.4" fill="#a8acb4"/><rect x="435.3" y="247.8" width="57.0" height="57.6" fill="#c1c4cb" stroke="#d9dce1" stroke-width="1.2"/><circle cx="460.7" cy="293.5" r="1.8" fill="#d6d9dd"/><circle cx="460.7" cy="292.9" r="1.8" fill="#a8acb4"/><circle cx="450.3" cy="264.6" r="1.1" fill="#d6d9dd"/><circle cx="450.3" cy="264.0" r="1.1" fill="#a8acb4"/><rect x="61.5" y="310.3" width="55.3" height="57.6" fill="#c1c4cb" stroke="#d9dce1" stroke-width="1.2"/><circle cx="100.6" cy="330.6" r="1.4" fill="#d6d9dd"/><circle cx="100.6" cy="330.0" r="1.4" fill="#a8acb4"/><circle cx="103.9" cy="318.3" r="1.7" fill="#d6d9dd"/><circle cx="103.9" cy="317.7" r="1.7" fill="#a8acb4"/><rect x="122.4" y="310.3" width="57.0" height="57.6" fill="#c1c4cb" stroke="#d9dce1" stroke-width="1.2"/><circle cx="158.4" cy="353.4" r="1.4" fill="#d6d9dd"/><circle cx="158.4" cy="352.8" r="1.4" fill="#a8acb4"/><circle cx="166.1" cy="356.4" r="0.9" fill="#d6d9dd"/><circle cx="166.1" cy="355.8" r="0.9" fill="#a8acb4"/><circle cx="134.7" cy="339.2" r="1.8" fill="#d6d9dd"/><circle cx="134.7" cy="338.6" r="1.8" fill="#a8acb4"/><circle cx="163.8" cy="343.8" r="1.7" fill="#d6d9dd"/><circle cx="163.8" cy="343.2" r="1.7" fill="#a8acb4"/><rect x="185.0" y="310.3" width="57.0" height="57.6" fill="#afb2b8" stroke="#d9dce1" stroke-width="1.2"/><circle cx="198.2" cy="337.5" r="1.6" fill="#d6d9dd"/><circle cx="198.2" cy="336.9" r="1.6" fill="#a8acb4"/><circle cx="216.1" cy="330.6" r="1.4" fill="#d6d9dd"/><circle cx="216.1" cy="330.0" r="1.4" fill="#a8acb4"/><rect x="247.6" y="310.3" width="57.0" height="57.6" fill="#afb2b8" stroke="#d9dce1" stroke-width="1.2"/><circle cx="289.3" cy="320.4" r="1.4" fill="#d6d9dd"/><circle cx="289.3" cy="319.8" r="1.4" fill="#a8acb4"/><circle cx="264.3" cy="328.3" r="1.7" fill="#d6d9dd"/><circle cx="264.3" cy="327.7" r="1.7" fill="#a8acb4"/><circle cx="276.4" cy="341.6" r="1.7" fill="#d6d9dd"/><circle cx="276.4" cy="341.0" r="1.7" fill="#a8acb4"/><circle cx="295.3" cy="336.1" r="1.5" fill="#d6d9dd"/><circle cx="295.3" cy="335.5" r="1.5" fill="#a8acb4"/><rect x="310.1" y="310.3" width="57.0" height="57.6" fill="#c1c4cb" stroke="#d9dce1" stroke-width="1.2"/><circle cx="347.6" cy="336.5" r="1.4" fill="#d6d9dd"/><circle cx="347.6" cy="335.9" r="1.4" fill="#a8acb4"/><circle cx="337.6" cy="359.3" r="1.6" fill="#d6d9dd"/><circle cx="337.6" cy="358.7" r="1.6" fill="#a8acb4"/><rect x="372.7" y="310.3" width="57.0" height="57.6" fill="#c1c4cb" stroke="#d9dce1" stroke-width="1.2"/><circle cx="420.9" cy="357.0" r="1.0" fill="#d6d9dd"/><circle cx="420.9" cy="356.4" r="1.0" fill="#a8acb4"/><circle cx="398.8" cy="334.9" r="1.2" fill="#d6d9dd"/><circle cx="398.8" cy="334.3" r="1.2" fill="#a8acb4"/><circle cx="392.6" cy="346.7" r="1.3" fill="#d6d9dd"/><circle cx="392.6" cy="346.1" r="1.3" fill="#a8acb4"/><rect x="435.3" y="310.3" width="57.0" height="57.6" fill="#c1c4cb" stroke="#d9dce1" stroke-width="1.2"/><circle cx="471.7" cy="352.0" r="1.9" fill="#d6d9dd"/><circle cx="471.7" cy="351.4" r="1.9" fill="#a8acb4"/><circle cx="447.7" cy="348.8" r="1.6" fill="#d6d9dd"/><circle cx="447.7" cy="348.2" r="1.6" fill="#a8acb4"/><rect x="61.5" y="372.9" width="55.3" height="57.6" fill="#c1c4cb" stroke="#d9dce1" stroke-width="1.2"/><circle cx="76.8" cy="384.4" r="1.3" fill="#d6d9dd"/><circle cx="76.8" cy="383.8" r="1.3" fill="#a8acb4"/><circle cx="99.8" cy="382.4" r="1.9" fill="#d6d9dd"/><circle cx="99.8" cy="381.8" r="1.9" fill="#a8acb4"/><rect x="122.4" y="372.9" width="57.0" height="57.6" fill="#c1c4cb" stroke="#d9dce1" stroke-width="1.2"/><circle cx="173.7" cy="416.8" r="0.9" fill="#d6d9dd"/><circle cx="173.7" cy="416.2" r="0.9" fill="#a8acb4"/><circle cx="147.7" cy="402.0" r="1.1" fill="#d6d9dd"/><circle cx="147.7" cy="401.4" r="1.1" fill="#a8acb4"/><rect x="185.0" y="372.9" width="57.0" height="57.6" fill="#c1c4cb" stroke="#d9dce1" stroke-width="1.2"/><circle cx="206.8" cy="382.3" r="1.2" fill="#d6d9dd"/><circle cx="206.8" cy="381.7" r="1.2" fill="#a8acb4"/><circle cx="205.9" cy="399.4" r="1.6" fill="#d6d9dd"/><circle cx="205.9" cy="398.8" r="1.6" fill="#a8acb4"/><rect x="247.6" y="372.9" width="57.0" height="57.6" fill="#c1c4cb" stroke="#d9dce1" stroke-width="1.2"/><circle cx="268.2" cy="407.1" r="1.4" fill="#d6d9dd"/><circle cx="268.2" cy="406.5" r="1.4" fill="#a8acb4"/><circle cx="255.8" cy="423.9" r="1.7" fill="#d6d9dd"/><circle cx="255.8" cy="423.3" r="1.7" fill="#a8acb4"/><circle cx="298.0" cy="382.9" r="1.0" fill="#d6d9dd"/><circle cx="298.0" cy="382.3" r="1.0" fill="#a8acb4"/><circle cx="254.6" cy="414.3" r="1.1" fill="#d6d9dd"/><circle cx="254.6" cy="413.7" r="1.1" fill="#a8acb4"/><rect x="310.1" y="372.9" width="57.0" height="57.6" fill="#c1c4cb" stroke="#d9dce1" stroke-width="1.2"/><circle cx="353.5" cy="417.6" r="1.6" fill="#d6d9dd"/><circle cx="353.5" cy="417.0" r="1.6" fill="#a8acb4"/><circle cx="359.4" cy="396.9" r="1.4" fill="#d6d9dd"/><circle cx="359.4" cy="396.3" r="1.4" fill="#a8acb4"/><rect x="372.7" y="372.9" width="57.0" height="57.6" fill="#b4b7b9" stroke="#d9dce1" stroke-width="1.2"/><circle cx="410.6" cy="382.2" r="0.8" fill="#d6d9dd"/><circle cx="410.6" cy="381.6" r="0.8" fill="#a8acb4"/><circle cx="410.0" cy="397.8" r="0.8" fill="#d6d9dd"/><circle cx="410.0" cy="397.2" r="0.8" fill="#a8acb4"/><circle cx="421.6" cy="407.6" r="1.7" fill="#d6d9dd"/><circle cx="421.6" cy="407.0" r="1.7" fill="#a8acb4"/><circle cx="381.8" cy="417.9" r="0.8" fill="#d6d9dd"/><circle cx="381.8" cy="417.3" r="0.8" fill="#a8acb4"/><rect x="435.3" y="372.9" width="57.0" height="57.6" fill="#c1c4cb" stroke="#d9dce1" stroke-width="1.2"/><circle cx="461.7" cy="393.8" r="1.4" fill="#d6d9dd"/><circle cx="461.7" cy="393.2" r="1.4" fill="#a8acb4"/><rect x="61.5" y="435.5" width="55.3" height="57.3" fill="#afb2b8" stroke="#d9dce1" stroke-width="1.2"/><circle cx="94.0" cy="442.6" r="1.6" fill="#d6d9dd"/><circle cx="94.0" cy="442.0" r="1.6" fill="#a8acb4"/><circle cx="108.7" cy="485.5" r="1.0" fill="#d6d9dd"/><circle cx="108.7" cy="484.9" r="1.0" fill="#a8acb4"/><circle cx="73.4" cy="483.8" r="1.5" fill="#d6d9dd"/><circle cx="73.4" cy="483.2" r="1.5" fill="#a8acb4"/><rect x="122.4" y="435.5" width="57.0" height="57.3" fill="#c1c4cb" stroke="#d9dce1" stroke-width="1.2"/><circle cx="141.1" cy="463.8" r="0.9" fill="#d6d9dd"/><circle cx="141.1" cy="463.2" r="0.9" fill="#a8acb4"/><circle cx="143.8" cy="441.5" r="1.0" fill="#d6d9dd"/><circle cx="143.8" cy="440.9" r="1.0" fill="#a8acb4"/><rect x="185.0" y="435.5" width="57.0" height="57.3" fill="#c1c4cb" stroke="#d9dce1" stroke-width="1.2"/><circle cx="191.0" cy="464.0" r="2.0" fill="#d6d9dd"/><circle cx="191.0" cy="463.4" r="2.0" fill="#a8acb4"/><rect x="247.6" y="435.5" width="57.0" height="57.3" fill="#afb2b8" stroke="#d9dce1" stroke-width="1.2"/><circle cx="264.2" cy="461.3" r="1.6" fill="#d6d9dd"/><circle cx="264.2" cy="460.7" r="1.6" fill="#a8acb4"/><circle cx="283.0" cy="471.0" r="1.4" fill="#d6d9dd"/><circle cx="283.0" cy="470.4" r="1.4" fill="#a8acb4"/><circle cx="294.2" cy="485.5" r="1.1" fill="#d6d9dd"/><circle cx="294.2" cy="484.9" r="1.1" fill="#a8acb4"/><circle cx="262.8" cy="451.2" r="1.0" fill="#d6d9dd"/><circle cx="262.8" cy="450.6" r="1.0" fill="#a8acb4"/><rect x="310.1" y="435.5" width="57.0" height="57.3" fill="#c1c4cb" stroke="#d9dce1" stroke-width="1.2"/><circle cx="334.2" cy="456.7" r="0.8" fill="#d6d9dd"/><circle cx="334.2" cy="456.1" r="0.8" fill="#a8acb4"/><circle cx="321.4" cy="443.9" r="1.7" fill="#d6d9dd"/><circle cx="321.4" cy="443.3" r="1.7" fill="#a8acb4"/><rect x="372.7" y="435.5" width="57.0" height="57.3" fill="#c1c4cb" stroke="#d9dce1" stroke-width="1.2"/><circle cx="398.0" cy="443.2" r="1.6" fill="#d6d9dd"/><circle cx="398.0" cy="442.6" r="1.6" fill="#a8acb4"/><circle cx="395.7" cy="464.0" r="2.0" fill="#d6d9dd"/><circle cx="395.7" cy="463.4" r="2.0" fill="#a8acb4"/><circle cx="405.8" cy="472.7" r="0.8" fill="#d6d9dd"/><circle cx="405.8" cy="472.1" r="0.8" fill="#a8acb4"/><rect x="435.3" y="435.5" width="57.0" height="57.3" fill="#c1c4cb" stroke="#d9dce1" stroke-width="1.2"/><circle cx="447.9" cy="461.2" r="1.0" fill="#d6d9dd"/><circle cx="447.9" cy="460.6" r="1.0" fill="#a8acb4"/><circle cx="485.3" cy="485.6" r="1.4" fill="#d6d9dd"/><circle cx="485.3" cy="485.0" r="1.4" fill="#a8acb4"/><polygon points="0.0,0.0 57.0,0.0 47.0,7.0 7.0,7.0" fill="#687173"/><polygon points="57.0,0.0 57.0,56.5 47.0,47.5 47.0,7.0" fill="#4c5557"/><polygon points="57.0,56.5 0.0,56.5 7.0,47.5 47.0,47.5" fill="#545d5f"/><polygon points="0.0,56.5 0.0,0.0 7.0,7.0 7.0,47.5" fill="#5b6466"/><polygon points="7.0,7.0 47.0,7.0 47.0,47.5 7.0,47.5" fill="#5e6769" stroke="#93a0a0" stroke-width="1.1"/><path d="M0.0,0.0 L7.0,7.0 M57.0,0.0 L47.0,7.0 M57.0,56.5 L47.0,47.5 M0.0,56.5 L7.0,47.5" stroke="#93a0a0" stroke-width="0.9" opacity="0.8"/><polygon points="57.0,0.0 111.8,0.0 101.8,7.0 64.0,7.0" fill="#879494"/><polygon points="111.8,0.0 111.8,56.5 101.8,47.5 101.8,7.0" fill="#6b7878"/><polygon points="111.8,56.5 57.0,56.5 64.0,47.5 101.8,47.5" fill="#738080"/><polygon points="57.0,56.5 57.0,0.0 64.0,7.0 64.0,47.5" fill="#7a8787"/><polygon points="64.0,7.0 101.8,7.0 101.8,47.5 64.0,47.5" fill="#7d8a8a" stroke="#93a0a0" stroke-width="1.1"/><path d="M57.0,0.0 L64.0,7.0 M111.8,0.0 L101.8,7.0 M111.8,56.5 L101.8,47.5 M57.0,56.5 L64.0,47.5" stroke="#93a0a0" stroke-width="0.9" opacity="0.8"/><polygon points="111.8,0.0 166.5,0.0 156.5,7.0 118.8,7.0" fill="#687173"/><polygon points="166.5,0.0 166.5,56.5 156.5,47.5 156.5,7.0" fill="#4c5557"/><polygon points="166.5,56.5 111.8,56.5 118.8,47.5 156.5,47.5" fill="#545d5f"/><polygon points="111.8,56.5 111.8,0.0 118.8,7.0 118.8,47.5" fill="#5b6466"/><polygon points="118.8,7.0 156.5,7.0 156.5,47.5 118.8,47.5" fill="#5e6769" stroke="#93a0a0" stroke-width="1.1"/><path d="M111.8,0.0 L118.8,7.0 M166.5,0.0 L156.5,7.0 M166.5,56.5 L156.5,47.5 M111.8,56.5 L118.8,47.5" stroke="#93a0a0" stroke-width="0.9" opacity="0.8"/><polygon points="166.5,0.0 221.3,0.0 211.3,7.0 173.5,7.0" fill="#7f8c8c"/><polygon points="221.3,0.0 221.3,56.5 211.3,47.5 211.3,7.0" fill="#637070"/><polygon points="221.3,56.5 166.5,56.5 173.5,47.5 211.3,47.5" fill="#6b7878"/><polygon points="166.5,56.5 166.5,0.0 173.5,7.0 173.5,47.5" fill="#727f7f"/><polygon points="173.5,7.0 211.3,7.0 211.3,47.5 173.5,47.5" fill="#758282" stroke="#93a0a0" stroke-width="1.1"/><path d="M166.5,0.0 L173.5,7.0 M221.3,0.0 L211.3,7.0 M221.3,56.5 L211.3,47.5 M166.5,56.5 L173.5,47.5" stroke="#93a0a0" stroke-width="0.9" opacity="0.8"/><polygon points="221.3,0.0 276.1,0.0 266.1,7.0 228.3,7.0" fill="#879494"/><polygon points="276.1,0.0 276.1,56.5 266.1,47.5 266.1,7.0" fill="#6b7878"/><polygon points="276.1,56.5 221.3,56.5 228.3,47.5 266.1,47.5" fill="#738080"/><polygon points="221.3,56.5 221.3,0.0 228.3,7.0 228.3,47.5" fill="#7a8787"/><polygon points="228.3,7.0 266.1,7.0 266.1,47.5 228.3,47.5" fill="#7d8a8a" stroke="#93a0a0" stroke-width="1.1"/><path d="M221.3,0.0 L228.3,7.0 M276.1,0.0 L266.1,7.0 M276.1,56.5 L266.1,47.5 M221.3,56.5 L228.3,47.5" stroke="#93a0a0" stroke-width="0.9" opacity="0.8"/><polygon points="276.1,0.0 330.8,0.0 320.8,7.0 283.1,7.0" fill="#687173"/><polygon points="330.8,0.0 330.8,56.5 320.8,47.5 320.8,7.0" fill="#4c5557"/><polygon points="330.8,56.5 276.1,56.5 283.1,47.5 320.8,47.5" fill="#545d5f"/><polygon points="276.1,56.5 276.1,0.0 283.1,7.0 283.1,47.5" fill="#5b6466"/><polygon points="283.1,7.0 320.8,7.0 320.8,47.5 283.1,47.5" fill="#5e6769" stroke="#93a0a0" stroke-width="1.1"/><path d="M276.1,0.0 L283.1,7.0 M330.8,0.0 L320.8,7.0 M330.8,56.5 L320.8,47.5 M276.1,56.5 L283.1,47.5" stroke="#93a0a0" stroke-width="0.9" opacity="0.8"/><polygon points="330.8,0.0 385.6,0.0 375.6,7.0 337.8,7.0" fill="#778383"/><polygon points="385.6,0.0 385.6,56.5 375.6,47.5 375.6,7.0" fill="#5b6767"/><polygon points="385.6,56.5 330.8,56.5 337.8,47.5 375.6,47.5" fill="#636f6f"/><polygon points="330.8,56.5 330.8,0.0 337.8,7.0 337.8,47.5" fill="#6a7676"/><polygon points="337.8,7.0 375.6,7.0 375.6,47.5 337.8,47.5" fill="#6d7979" stroke="#93a0a0" stroke-width="1.1"/><path d="M330.8,0.0 L337.8,7.0 M385.6,0.0 L375.6,7.0 M385.6,56.5 L375.6,47.5 M330.8,56.5 L337.8,47.5" stroke="#93a0a0" stroke-width="0.9" opacity="0.8"/><polygon points="385.6,0.0 440.3,0.0 430.3,7.0 392.6,7.0" fill="#879494"/><polygon points="440.3,0.0 440.3,56.5 430.3,47.5 430.3,7.0" fill="#6b7878"/><polygon points="440.3,56.5 385.6,56.5 392.6,47.5 430.3,47.5" fill="#738080"/><polygon points="385.6,56.5 385.6,0.0 392.6,7.0 392.6,47.5" fill="#7a8787"/><polygon points="392.6,7.0 430.3,7.0 430.3,47.5 392.6,47.5" fill="#7d8a8a" stroke="#93a0a0" stroke-width="1.1"/><path d="M385.6,0.0 L392.6,7.0 M440.3,0.0 L430.3,7.0 M440.3,56.5 L430.3,47.5 M385.6,56.5 L392.6,47.5" stroke="#93a0a0" stroke-width="0.9" opacity="0.8"/><polygon points="440.3,0.0 495.1,0.0 485.1,7.0 447.3,7.0" fill="#879494"/><polygon points="495.1,0.0 495.1,56.5 485.1,47.5 485.1,7.0" fill="#6b7878"/><polygon points="495.1,56.5 440.3,56.5 447.3,47.5 485.1,47.5" fill="#738080"/><polygon points="440.3,56.5 440.3,0.0 447.3,7.0 447.3,47.5" fill="#7a8787"/><polygon points="447.3,7.0 485.1,7.0 485.1,47.5 447.3,47.5" fill="#7d8a8a" stroke="#93a0a0" stroke-width="1.1"/><path d="M440.3,0.0 L447.3,7.0 M495.1,0.0 L485.1,7.0 M495.1,56.5 L485.1,47.5 M440.3,56.5 L447.3,47.5" stroke="#93a0a0" stroke-width="0.9" opacity="0.8"/><polygon points="495.1,0.0 552.6,0.0 542.6,7.0 502.1,7.0" fill="#778383"/><polygon points="552.6,0.0 552.6,56.5 542.6,47.5 542.6,7.0" fill="#5b6767"/><polygon points="552.6,56.5 495.1,56.5 502.1,47.5 542.6,47.5" fill="#636f6f"/><polygon points="495.1,56.5 495.1,0.0 502.1,7.0 502.1,47.5" fill="#6a7676"/><polygon points="502.1,7.0 542.6,7.0 542.6,47.5 502.1,47.5" fill="#6d7979" stroke="#93a0a0" stroke-width="1.1"/><path d="M495.1,0.0 L502.1,7.0 M552.6,0.0 L542.6,7.0 M552.6,56.5 L542.6,47.5 M495.1,56.5 L502.1,47.5" stroke="#93a0a0" stroke-width="0.9" opacity="0.8"/><polygon points="0.0,494.3 57.0,494.3 45.7,500.9 7.3,500.9" fill="#687173"/><polygon points="57.0,494.3 57.0,550.6 45.7,542.3 45.7,500.9" fill="#4c5557"/><polygon points="57.0,550.6 0.0,550.6 7.3,542.3 45.7,542.3" fill="#545d5f"/><polygon points="0.0,550.6 0.0,494.3 7.3,500.9 7.3,542.3" fill="#5b6466"/><polygon points="7.3,500.9 45.7,500.9 45.7,542.3 7.3,542.3" fill="#5e6769" stroke="#93a0a0" stroke-width="1.1"/><path d="M0.0,494.3 L7.3,500.9 M57.0,494.3 L45.7,500.9 M57.0,550.6 L45.7,542.3 M0.0,550.6 L7.3,542.3" stroke="#93a0a0" stroke-width="0.9" opacity="0.8"/><polygon points="57.0,494.3 111.8,494.3 100.5,500.9 64.3,500.9" fill="#879494"/><polygon points="111.8,494.3 111.8,550.6 100.5,542.3 100.5,500.9" fill="#6b7878"/><polygon points="111.8,550.6 57.0,550.6 64.3,542.3 100.5,542.3" fill="#738080"/><polygon points="57.0,550.6 57.0,494.3 64.3,500.9 64.3,542.3" fill="#7a8787"/><polygon points="64.3,500.9 100.5,500.9 100.5,542.3 64.3,542.3" fill="#7d8a8a" stroke="#93a0a0" stroke-width="1.1"/><path d="M57.0,494.3 L64.3,500.9 M111.8,494.3 L100.5,500.9 M111.8,550.6 L100.5,542.3 M57.0,550.6 L64.3,542.3" stroke="#93a0a0" stroke-width="0.9" opacity="0.8"/><polygon points="111.8,494.3 166.5,494.3 155.2,500.9 119.1,500.9" fill="#7f8c8c"/><polygon points="166.5,494.3 166.5,550.6 155.2,542.3 155.2,500.9" fill="#637070"/><polygon points="166.5,550.6 111.8,550.6 119.1,542.3 155.2,542.3" fill="#6b7878"/><polygon points="111.8,550.6 111.8,494.3 119.1,500.9 119.1,542.3" fill="#727f7f"/><polygon points="119.1,500.9 155.2,500.9 155.2,542.3 119.1,542.3" fill="#758282" stroke="#93a0a0" stroke-width="1.1"/><path d="M111.8,494.3 L119.1,500.9 M166.5,494.3 L155.2,500.9 M166.5,550.6 L155.2,542.3 M111.8,550.6 L119.1,542.3" stroke="#93a0a0" stroke-width="0.9" opacity="0.8"/><polygon points="166.5,494.3 221.3,494.3 210.0,500.9 173.8,500.9" fill="#778383"/><polygon points="221.3,494.3 221.3,550.6 210.0,542.3 210.0,500.9" fill="#5b6767"/><polygon points="221.3,550.6 166.5,550.6 173.8,542.3 210.0,542.3" fill="#636f6f"/><polygon points="166.5,550.6 166.5,494.3 173.8,500.9 173.8,542.3" fill="#6a7676"/><polygon points="173.8,500.9 210.0,500.9 210.0,542.3 173.8,542.3" fill="#6d7979" stroke="#93a0a0" stroke-width="1.1"/><path d="M166.5,494.3 L173.8,500.9 M221.3,494.3 L210.0,500.9 M221.3,550.6 L210.0,542.3 M166.5,550.6 L173.8,542.3" stroke="#93a0a0" stroke-width="0.9" opacity="0.8"/><polygon points="221.3,494.3 276.1,494.3 264.8,500.9 228.6,500.9" fill="#687173"/><polygon points="276.1,494.3 276.1,550.6 264.8,542.3 264.8,500.9" fill="#4c5557"/><polygon points="276.1,550.6 221.3,550.6 228.6,542.3 264.8,542.3" fill="#545d5f"/><polygon points="221.3,550.6 221.3,494.3 228.6,500.9 228.6,542.3" fill="#5b6466"/><polygon points="228.6,500.9 264.8,500.9 264.8,542.3 228.6,542.3" fill="#5e6769" stroke="#93a0a0" stroke-width="1.1"/><path d="M221.3,494.3 L228.6,500.9 M276.1,494.3 L264.8,500.9 M276.1,550.6 L264.8,542.3 M221.3,550.6 L228.6,542.3" stroke="#93a0a0" stroke-width="0.9" opacity="0.8"/><polygon points="276.1,494.3 330.8,494.3 319.5,500.9 283.4,500.9" fill="#879494"/><polygon points="330.8,494.3 330.8,550.6 319.5,542.3 319.5,500.9" fill="#6b7878"/><polygon points="330.8,550.6 276.1,550.6 283.4,542.3 319.5,542.3" fill="#738080"/><polygon points="276.1,550.6 276.1,494.3 283.4,500.9 283.4,542.3" fill="#7a8787"/><polygon points="283.4,500.9 319.5,500.9 319.5,542.3 283.4,542.3" fill="#7d8a8a" stroke="#93a0a0" stroke-width="1.1"/><path d="M276.1,494.3 L283.4,500.9 M330.8,494.3 L319.5,500.9 M330.8,550.6 L319.5,542.3 M276.1,550.6 L283.4,542.3" stroke="#93a0a0" stroke-width="0.9" opacity="0.8"/><polygon points="330.8,494.3 385.6,494.3 374.3,500.9 338.1,500.9" fill="#7f8c8c"/><polygon points="385.6,494.3 385.6,550.6 374.3,542.3 374.3,500.9" fill="#637070"/><polygon points="385.6,550.6 330.8,550.6 338.1,542.3 374.3,542.3" fill="#6b7878"/><polygon points="330.8,550.6 330.8,494.3 338.1,500.9 338.1,542.3" fill="#727f7f"/><polygon points="338.1,500.9 374.3,500.9 374.3,542.3 338.1,542.3" fill="#758282" stroke="#93a0a0" stroke-width="1.1"/><path d="M330.8,494.3 L338.1,500.9 M385.6,494.3 L374.3,500.9 M385.6,550.6 L374.3,542.3 M330.8,550.6 L338.1,542.3" stroke="#93a0a0" stroke-width="0.9" opacity="0.8"/><polygon points="385.6,494.3 440.3,494.3 429.0,500.9 392.9,500.9" fill="#687173"/><polygon points="440.3,494.3 440.3,550.6 429.0,542.3 429.0,500.9" fill="#4c5557"/><polygon points="440.3,550.6 385.6,550.6 392.9,542.3 429.0,542.3" fill="#545d5f"/><polygon points="385.6,550.6 385.6,494.3 392.9,500.9 392.9,542.3" fill="#5b6466"/><polygon points="392.9,500.9 429.0,500.9 429.0,542.3 392.9,542.3" fill="#5e6769" stroke="#93a0a0" stroke-width="1.1"/><path d="M385.6,494.3 L392.9,500.9 M440.3,494.3 L429.0,500.9 M440.3,550.6 L429.0,542.3 M385.6,550.6 L392.9,542.3" stroke="#93a0a0" stroke-width="0.9" opacity="0.8"/><polygon points="440.3,494.3 495.1,494.3 483.8,500.9 447.6,500.9" fill="#879494"/><polygon points="495.1,494.3 495.1,550.6 483.8,542.3 483.8,500.9" fill="#6b7878"/><polygon points="495.1,550.6 440.3,550.6 447.6,542.3 483.8,542.3" fill="#738080"/><polygon points="440.3,550.6 440.3,494.3 447.6,500.9 447.6,542.3" fill="#7a8787"/><polygon points="447.6,500.9 483.8,500.9 483.8,542.3 447.6,542.3" fill="#7d8a8a" stroke="#93a0a0" stroke-width="1.1"/><path d="M440.3,494.3 L447.6,500.9 M495.1,494.3 L483.8,500.9 M495.1,550.6 L483.8,542.3 M440.3,550.6 L447.6,542.3" stroke="#93a0a0" stroke-width="0.9" opacity="0.8"/><polygon points="495.1,494.3 552.6,494.3 541.3,500.9 502.4,500.9" fill="#687173"/><polygon points="552.6,494.3 552.6,550.6 541.3,542.3 541.3,500.9" fill="#4c5557"/><polygon points="552.6,550.6 495.1,550.6 502.4,542.3 541.3,542.3" fill="#545d5f"/><polygon points="495.1,550.6 495.1,494.3 502.4,500.9 502.4,542.3" fill="#5b6466"/><polygon points="502.4,500.9 541.3,500.9 541.3,542.3 502.4,542.3" fill="#5e6769" stroke="#93a0a0" stroke-width="1.1"/><path d="M495.1,494.3 L502.4,500.9 M552.6,494.3 L541.3,500.9 M552.6,550.6 L541.3,542.3 M495.1,550.6 L502.4,542.3" stroke="#93a0a0" stroke-width="0.9" opacity="0.8"/><polygon points="0.0,56.5 57.0,56.5 50.0,64.5 11.5,64.5" fill="#778484"/><polygon points="57.0,56.5 57.0,111.2 50.0,103.2 50.0,64.5" fill="#8b9898"/><polygon points="57.0,111.2 0.0,111.2 11.5,103.2 50.0,103.2" fill="#798686"/><polygon points="0.0,111.2 0.0,56.5 11.5,64.5 11.5,103.2" fill="#6d7a7a"/><polygon points="11.5,64.5 50.0,64.5 50.0,103.2 11.5,103.2" fill="#7d8a8a" stroke="#93a0a0" stroke-width="1.1"/><path d="M0.0,56.5 L11.5,64.5 M57.0,56.5 L50.0,64.5 M57.0,111.2 L50.0,103.2 M0.0,111.2 L11.5,103.2" stroke="#93a0a0" stroke-width="0.9" opacity="0.8"/><polygon points="0.0,111.2 57.0,111.2 50.0,119.2 11.5,119.2" fill="#6f7c7c"/><polygon points="57.0,111.2 57.0,165.9 50.0,157.9 50.0,119.2" fill="#839090"/><polygon points="57.0,165.9 0.0,165.9 11.5,157.9 50.0,157.9" fill="#717e7e"/><polygon points="0.0,165.9 0.0,111.2 11.5,119.2 11.5,157.9" fill="#657272"/><polygon points="11.5,119.2 50.0,119.2 50.0,157.9 11.5,157.9" fill="#758282" stroke="#93a0a0" stroke-width="1.1"/><path d="M0.0,111.2 L11.5,119.2 M57.0,111.2 L50.0,119.2 M57.0,165.9 L50.0,157.9 M0.0,165.9 L11.5,157.9" stroke="#93a0a0" stroke-width="0.9" opacity="0.8"/><polygon points="0.0,165.9 57.0,165.9 50.0,173.9 11.5,173.9" fill="#586163"/><polygon points="57.0,165.9 57.0,220.7 50.0,212.7 50.0,173.9" fill="#6c7577"/><polygon points="57.0,220.7 0.0,220.7 11.5,212.7 50.0,212.7" fill="#5a6365"/><polygon points="0.0,220.7 0.0,165.9 11.5,173.9 11.5,212.7" fill="#4e5759"/><polygon points="11.5,173.9 50.0,173.9 50.0,212.7 11.5,212.7" fill="#5e6769" stroke="#93a0a0" stroke-width="1.1"/><path d="M0.0,165.9 L11.5,173.9 M57.0,165.9 L50.0,173.9 M57.0,220.7 L50.0,212.7 M0.0,220.7 L11.5,212.7" stroke="#93a0a0" stroke-width="0.9" opacity="0.8"/><polygon points="0.0,220.7 57.0,220.7 50.0,228.7 11.5,228.7" fill="#586163"/><polygon points="57.0,220.7 57.0,275.4 50.0,267.4 50.0,228.7" fill="#6c7577"/><polygon points="57.0,275.4 0.0,275.4 11.5,267.4 50.0,267.4" fill="#5a6365"/><polygon points="0.0,275.4 0.0,220.7 11.5,228.7 11.5,267.4" fill="#4e5759"/><polygon points="11.5,228.7 50.0,228.7 50.0,267.4 11.5,267.4" fill="#5e6769" stroke="#93a0a0" stroke-width="1.1"/><path d="M0.0,220.7 L11.5,228.7 M57.0,220.7 L50.0,228.7 M57.0,275.4 L50.0,267.4 M0.0,275.4 L11.5,267.4" stroke="#93a0a0" stroke-width="0.9" opacity="0.8"/><polygon points="0.0,275.4 57.0,275.4 50.0,283.4 11.5,283.4" fill="#778484"/><polygon points="57.0,275.4 57.0,330.1 50.0,322.1 50.0,283.4" fill="#8b9898"/><polygon points="57.0,330.1 0.0,330.1 11.5,322.1 50.0,322.1" fill="#798686"/><polygon points="0.0,330.1 0.0,275.4 11.5,283.4 11.5,322.1" fill="#6d7a7a"/><polygon points="11.5,283.4 50.0,283.4 50.0,322.1 11.5,322.1" fill="#7d8a8a" stroke="#93a0a0" stroke-width="1.1"/><path d="M0.0,275.4 L11.5,283.4 M57.0,275.4 L50.0,283.4 M57.0,330.1 L50.0,322.1 M0.0,330.1 L11.5,322.1" stroke="#93a0a0" stroke-width="0.9" opacity="0.8"/><polygon points="0.0,330.1 57.0,330.1 50.0,338.1 11.5,338.1" fill="#778484"/><polygon points="57.0,330.1 57.0,384.9 50.0,376.9 50.0,338.1" fill="#8b9898"/><polygon points="57.0,384.9 0.0,384.9 11.5,376.9 50.0,376.9" fill="#798686"/><polygon points="0.0,384.9 0.0,330.1 11.5,338.1 11.5,376.9" fill="#6d7a7a"/><polygon points="11.5,338.1 50.0,338.1 50.0,376.9 11.5,376.9" fill="#7d8a8a" stroke="#93a0a0" stroke-width="1.1"/><path d="M0.0,330.1 L11.5,338.1 M57.0,330.1 L50.0,338.1 M57.0,384.9 L50.0,376.9 M0.0,384.9 L11.5,376.9" stroke="#93a0a0" stroke-width="0.9" opacity="0.8"/><polygon points="0.0,384.9 57.0,384.9 50.0,392.9 11.5,392.9" fill="#586163"/><polygon points="57.0,384.9 57.0,439.6 50.0,431.6 50.0,392.9" fill="#6c7577"/><polygon points="57.0,439.6 0.0,439.6 11.5,431.6 50.0,431.6" fill="#5a6365"/><polygon points="0.0,439.6 0.0,384.9 11.5,392.9 11.5,431.6" fill="#4e5759"/><polygon points="11.5,392.9 50.0,392.9 50.0,431.6 11.5,431.6" fill="#5e6769" stroke="#93a0a0" stroke-width="1.1"/><path d="M0.0,384.9 L11.5,392.9 M57.0,384.9 L50.0,392.9 M57.0,439.6 L50.0,431.6 M0.0,439.6 L11.5,431.6" stroke="#93a0a0" stroke-width="0.9" opacity="0.8"/><polygon points="0.0,439.6 57.0,439.6 50.0,447.6 11.5,447.6" fill="#778484"/><polygon points="57.0,439.6 57.0,494.3 50.0,486.3 50.0,447.6" fill="#8b9898"/><polygon points="57.0,494.3 0.0,494.3 11.5,486.3 50.0,486.3" fill="#798686"/><polygon points="0.0,494.3 0.0,439.6 11.5,447.6 11.5,486.3" fill="#6d7a7a"/><polygon points="11.5,447.6 50.0,447.6 50.0,486.3 11.5,486.3" fill="#7d8a8a" stroke="#93a0a0" stroke-width="1.1"/><path d="M0.0,439.6 L11.5,447.6 M57.0,439.6 L50.0,447.6 M57.0,494.3 L50.0,486.3 M0.0,494.3 L11.5,486.3" stroke="#93a0a0" stroke-width="0.9" opacity="0.8"/><polygon points="495.1,56.5 552.6,56.5 540.6,64.0 502.1,64.0" fill="#758282"/><polygon points="552.6,56.5 552.6,111.2 540.6,101.2 540.6,64.0" fill="#6d7a7a"/><polygon points="552.6,111.2 495.1,111.2 502.1,101.2 540.6,101.2" fill="#798686"/><polygon points="495.1,111.2 495.1,56.5 502.1,64.0 502.1,101.2" fill="#8d9a9a"/><polygon points="502.1,64.0 540.6,64.0 540.6,101.2 502.1,101.2" fill="#7d8a8a" stroke="#93a0a0" stroke-width="1.1"/><path d="M495.1,56.5 L502.1,64.0 M552.6,56.5 L540.6,64.0 M552.6,111.2 L540.6,101.2 M495.1,111.2 L502.1,101.2" stroke="#93a0a0" stroke-width="0.9" opacity="0.8"/><polygon points="495.1,111.2 552.6,111.2 540.6,118.7 502.1,118.7" fill="#565f61"/><polygon points="552.6,111.2 552.6,165.9 540.6,155.9 540.6,118.7" fill="#4e5759"/><polygon points="552.6,165.9 495.1,165.9 502.1,155.9 540.6,155.9" fill="#5a6365"/><polygon points="495.1,165.9 495.1,111.2 502.1,118.7 502.1,155.9" fill="#6e7779"/><polygon points="502.1,118.7 540.6,118.7 540.6,155.9 502.1,155.9" fill="#5e6769" stroke="#93a0a0" stroke-width="1.1"/><path d="M495.1,111.2 L502.1,118.7 M552.6,111.2 L540.6,118.7 M552.6,165.9 L540.6,155.9 M495.1,165.9 L502.1,155.9" stroke="#93a0a0" stroke-width="0.9" opacity="0.8"/><polygon points="495.1,165.9 552.6,165.9 540.6,173.4 502.1,173.4" fill="#6d7a7a"/><polygon points="552.6,165.9 552.6,220.7 540.6,210.7 540.6,173.4" fill="#657272"/><polygon points="552.6,220.7 495.1,220.7 502.1,210.7 540.6,210.7" fill="#717e7e"/><polygon points="495.1,220.7 495.1,165.9 502.1,173.4 502.1,210.7" fill="#859292"/><polygon points="502.1,173.4 540.6,173.4 540.6,210.7 502.1,210.7" fill="#758282" stroke="#93a0a0" stroke-width="1.1"/><path d="M495.1,165.9 L502.1,173.4 M552.6,165.9 L540.6,173.4 M552.6,220.7 L540.6,210.7 M495.1,220.7 L502.1,210.7" stroke="#93a0a0" stroke-width="0.9" opacity="0.8"/><polygon points="495.1,220.7 552.6,220.7 540.6,228.2 502.1,228.2" fill="#758282"/><polygon points="552.6,220.7 552.6,275.4 540.6,265.4 540.6,228.2" fill="#6d7a7a"/><polygon points="552.6,275.4 495.1,275.4 502.1,265.4 540.6,265.4" fill="#798686"/><polygon points="495.1,275.4 495.1,220.7 502.1,228.2 502.1,265.4" fill="#8d9a9a"/><polygon points="502.1,228.2 540.6,228.2 540.6,265.4 502.1,265.4" fill="#7d8a8a" stroke="#93a0a0" stroke-width="1.1"/><path d="M495.1,220.7 L502.1,228.2 M552.6,220.7 L540.6,228.2 M552.6,275.4 L540.6,265.4 M495.1,275.4 L502.1,265.4" stroke="#93a0a0" stroke-width="0.9" opacity="0.8"/><polygon points="495.1,275.4 552.6,275.4 540.6,282.9 502.1,282.9" fill="#565f61"/><polygon points="552.6,275.4 552.6,330.1 540.6,320.1 540.6,282.9" fill="#4e5759"/><polygon points="552.6,330.1 495.1,330.1 502.1,320.1 540.6,320.1" fill="#5a6365"/><polygon points="495.1,330.1 495.1,275.4 502.1,282.9 502.1,320.1" fill="#6e7779"/><polygon points="502.1,282.9 540.6,282.9 540.6,320.1 502.1,320.1" fill="#5e6769" stroke="#93a0a0" stroke-width="1.1"/><path d="M495.1,275.4 L502.1,282.9 M552.6,275.4 L540.6,282.9 M552.6,330.1 L540.6,320.1 M495.1,330.1 L502.1,320.1" stroke="#93a0a0" stroke-width="0.9" opacity="0.8"/><polygon points="495.1,330.1 552.6,330.1 540.6,337.6 502.1,337.6" fill="#657171"/><polygon points="552.6,330.1 552.6,384.9 540.6,374.9 540.6,337.6" fill="#5d6969"/><polygon points="552.6,384.9 495.1,384.9 502.1,374.9 540.6,374.9" fill="#697575"/><polygon points="495.1,384.9 495.1,330.1 502.1,337.6 502.1,374.9" fill="#7d8989"/><polygon points="502.1,337.6 540.6,337.6 540.6,374.9 502.1,374.9" fill="#6d7979" stroke="#93a0a0" stroke-width="1.1"/><path d="M495.1,330.1 L502.1,337.6 M552.6,330.1 L540.6,337.6 M552.6,384.9 L540.6,374.9 M495.1,384.9 L502.1,374.9" stroke="#93a0a0" stroke-width="0.9" opacity="0.8"/><polygon points="495.1,384.9 552.6,384.9 540.6,392.4 502.1,392.4" fill="#6d7a7a"/><polygon points="552.6,384.9 552.6,439.6 540.6,429.6 540.6,392.4" fill="#657272"/><polygon points="552.6,439.6 495.1,439.6 502.1,429.6 540.6,429.6" fill="#717e7e"/><polygon points="495.1,439.6 495.1,384.9 502.1,392.4 502.1,429.6" fill="#859292"/><polygon points="502.1,392.4 540.6,392.4 540.6,429.6 502.1,429.6" fill="#758282" stroke="#93a0a0" stroke-width="1.1"/><path d="M495.1,384.9 L502.1,392.4 M552.6,384.9 L540.6,392.4 M552.6,439.6 L540.6,429.6 M495.1,439.6 L502.1,429.6" stroke="#93a0a0" stroke-width="0.9" opacity="0.8"/><polygon points="495.1,439.6 552.6,439.6 540.6,447.1 502.1,447.1" fill="#758282"/><polygon points="552.6,439.6 552.6,494.3 540.6,484.3 540.6,447.1" fill="#6d7a7a"/><polygon points="552.6,494.3 495.1,494.3 502.1,484.3 540.6,484.3" fill="#798686"/><polygon points="495.1,494.3 495.1,439.6 502.1,447.1 502.1,484.3" fill="#8d9a9a"/><polygon points="502.1,447.1 540.6,447.1 540.6,484.3 502.1,484.3" fill="#7d8a8a" stroke="#93a0a0" stroke-width="1.1"/><path d="M495.1,439.6 L502.1,447.1 M552.6,439.6 L540.6,447.1 M552.6,494.3 L540.6,484.3 M495.1,494.3 L502.1,484.3" stroke="#93a0a0" stroke-width="0.9" opacity="0.8"/><defs><radialGradient id="ug2" cx="0.38" cy="0.32" r="0.75"><stop offset="0" stop-color="#5b9bd0"/><stop offset="0.6" stop-color="#3a6fa3"/><stop offset="1" stop-color="#25507e"/></radialGradient></defs><circle cx="467.8" cy="468.4" r="27.4" fill="url(#ug2)" stroke="#1f3d60" stroke-width="1.37"/><path d="M472.2 447.5 A21.4 21.4 0 0 1 483.7 454.1" fill="none" stroke="#6d9fd0" stroke-width="3.01" stroke-linecap="round" opacity="0.75"/><path d="M483.7 482.7 A21.4 21.4 0 0 1 472.2 489.3" fill="none" stroke="#6d9fd0" stroke-width="3.01" stroke-linecap="round" opacity="0.75"/><path d="M447.5 475.0 A21.4 21.4 0 0 1 447.5 461.8" fill="none" stroke="#6d9fd0" stroke-width="3.01" stroke-linecap="round" opacity="0.75"/><circle cx="467.8" cy="468.4" r="12.604" fill="#1b4a72"/><circle cx="467.8" cy="468.4" r="10.96" fill="#00eeee"/><circle cx="464.4" cy="449.0" r="3.8" fill="#f07b2a" stroke="#7a3a10" stroke-width="0.82"/><circle cx="486.9" cy="473.5" r="3.8" fill="#f07b2a" stroke="#7a3a10" stroke-width="0.82"/><circle cx="452.7" cy="481.1" r="3.8" fill="#f07b2a" stroke="#7a3a10" stroke-width="0.82"/></g></svg></div>
<div class="tab" style="left:1704px;top:122px;width:158px;height:23px"></div>
<svg class="a" style="left:1718px;top:125px" width="15" height="15" viewBox="0 0 15 15"><circle cx="7.5" cy="7.5" r="7" fill="#2a2a2a"/><rect x="6.3" y="2.5" width="2.4" height="2" fill="#ddd"/><path d="M5 6 L8.7 6 L8.7 11 L10 11 L10 12.5 L5 12.5 L5 11 L6.3 11 L6.3 7.5 L5 7.5 Z" fill="#ddd"/></svg>
<div class="t" style="left:1737.5px;top:126.4px;font-size:17.2px;color:#000;font-weight:normal;transform:scaleX(1.15);transform-origin:0 0;">Inspector</div>
<div class="a" style="left:1704px;top:145px;width:713px;height:1444px;background:#9c9c9c;border-left:1px solid #a9a9a9;border-top:1px solid #a6a6a6"></div>
<svg class="a" style="left:1.5px;top:909.8px" width="14" height="13"><path d="M0.3 0.3 L12.8 0.3 L6.5 11.6 Z" fill="#666"/></svg>
<svg class="a" style="left:20px;top:904.9px" width="22" height="19" viewBox="0 0 22 19"><defs><linearGradient id="fg" x1="0" y1="0" x2="0" y2="1"><stop offset="0" stop-color="#737c82"/><stop offset="1" stop-color="#3d454a"/></linearGradient></defs><path d="M1 6 L1 2.5 Q1 0.6 3 0.6 L8.5 0.6 Q10.3 0.6 10.3 2.5 L10.3 6 Z" fill="#b9b9b9" stroke="#7a7a7a" stroke-width="0.9"/><rect x="10" y="2" width="11" height="4" fill="#707070"/><rect x="0.5" y="5" width="21" height="13.5" rx="2" fill="url(#fg)"/><rect x="1.5" y="9" width="19" height="0.8" fill="#7f878c" opacity="0.5"/></svg>
<div class="t" style="left:45.6px;top:908.2px;font-size:16.8px;color:#000;font-weight:bold;transform:scaleX(1.13);transform-origin:0 0;">Assets</div>
<svg class="a" style="left:23.5px;top:933.0px" width="13" height="14"><path d="M0.5 0.3 L11.8 6.5 L0.5 12.7 Z" fill="#666"/></svg>
<svg class="a" style="left:41px;top:928.9px" width="22" height="19" viewBox="0 0 22 19"><defs><linearGradient id="fg" x1="0" y1="0" x2="0" y2="1"><stop offset="0" stop-color="#737c82"/><stop offset="1" stop-color="#3d454a"/></linearGradient></defs><path d="M1 6 L1 2.5 Q1 0.6 3 0.6 L8.5 0.6 Q10.3 0.6 10.3 2.5 L10.3 6 Z" fill="#b9b9b9" stroke="#7a7a7a" stroke-width="0.9"/><rect x="10" y="2" width="11" height="4" fill="#707070"/><rect x="0.5" y="5" width="21" height="13.5" rx="2" fill="url(#fg)"/><rect x="1.5" y="9" width="19" height="0.8" fill="#7f878c" opacity="0.5"/></svg>
<div class="t" style="left:66.6px;top:932.2px;font-size:16.8px;color:#000;font-weight:normal;transform:scaleX(1.13);transform-origin:0 0;">_Completed-Assets</div>
<svg class="a" style="left:22.5px;top:957.8px" width="14" height="13"><path d="M0.3 0.3 L12.8 0.3 L6.5 11.6 Z" fill="#666"/></svg>
<svg class="a" style="left:41px;top:952.9px" width="22" height="19" viewBox="0 0 22 19"><defs><linearGradient id="fg" x1="0" y1="0" x2="0" y2="1"><stop offset="0" stop-color="#737c82"/><stop offset="1" stop-color="#3d454a"/></linearGradient></defs><path d="M1 6 L1 2.5 Q1 0.6 3 0.6 L8.5 0.6 Q10.3 0.6 10.3 2.5 L10.3 6 Z" fill="#b9b9b9" stroke="#7a7a7a" stroke-width="0.9"/><rect x="10" y="2" width="11" height="4" fill="#707070"/><rect x="0.5" y="5" width="21" height="13.5" rx="2" fill="url(#fg)"/><rect x="1.5" y="9" width="19" height="0.8" fill="#7f878c" opacity="0.5"/></svg>
<div class="t" style="left:66.6px;top:956.2px;font-size:16.8px;color:#000;font-weight:normal;transform:scaleX(1.13);transform-origin:0 0;">Prefab</div>
<svg class="a" style="left:62px;top:976.5px" width="22" height="22" viewBox="0 0 22 22"><path d="M11 1 L21 5.5 L11 10 L1 5.5 Z" fill="#5aa0e0"/><path d="M1 5.5 L11 10 L11 21 L1 16.5 Z" fill="#3a78c0"/><path d="M21 5.5 L11 10 L11 21 L21 16.5 Z" fill="#2a5ea0"/></svg>
<div class="t" style="left:87.6px;top:980.2px;font-size:16.8px;color:#000;font-weight:normal;transform:scaleX(1.13);transform-origin:0 0;">Pickup</div>
<svg class="a" style="left:22.5px;top:1005.8px" width="14" height="13"><path d="M0.3 0.3 L12.8 0.3 L6.5 11.6 Z" fill="#666"/></svg>
<svg class="a" style="left:41px;top:1000.9px" width="22" height="19" viewBox="0 0 22 19"><defs><linearGradient id="fg" x1="0" y1="0" x2="0" y2="1"><stop offset="0" stop-color="#737c82"/><stop offset="1" stop-color="#3d454a"/></linearGradient></defs><path d="M1 6 L1 2.5 Q1 0.6 3 0.6 L8.5 0.6 Q10.3 0.6 10.3 2.5 L10.3 6 Z" fill="#b9b9b9" stroke="#7a7a7a" stroke-width="0.9"/><rect x="10" y="2" width="11" height="4" fill="#707070"/><rect x="0.5" y="5" width="21" height="13.5" rx="2" fill="url(#fg)"/><rect x="1.5" y="9" width="19" height="0.8" fill="#7f878c" opacity="0.5"/></svg>
<div class="t" style="left:66.6px;top:1004.2px;font-size:16.8px;color:#000;font-weight:normal;transform:scaleX(1.13);transform-origin:0 0;">Scenes</div>
<svg class="a" style="left:61px;top:1025.5px" width="21" height="21" viewBox="0 0 24 24"><path d="M19.5 1.5 L2 12 L19.5 22.5 L22.5 12 Z" fill="none" stroke="#111" stroke-width="2.6" stroke-linejoin="round"/><path d="M2 12 L15 12 M19.5 1.5 L15 12 L19.5 22.5" fill="none" stroke="#111" stroke-width="2.4"/></svg>
<div class="t" style="left:87.6px;top:1028.2px;font-size:16.8px;color:#000;font-weight:normal;transform:scaleX(1.13);transform-origin:0 0;">Main</div>
<svg class="a" style="left:61px;top:1049.5px" width="21" height="21" viewBox="0 0 24 24"><path d="M19.5 1.5 L2 12 L19.5 22.5 L22.5 12 Z" fill="none" stroke="#111" stroke-width="2.6" stroke-linejoin="round"/><path d="M2 12 L15 12 M19.5 1.5 L15 12 L19.5 22.5" fill="none" stroke="#111" stroke-width="2.4"/></svg>
<div class="t" style="left:87.6px;top:1052.2px;font-size:16.8px;color:#000;font-weight:normal;transform:scaleX(1.13);transform-origin:0 0;">SampleScene</div>
<svg class="a" style="left:22.5px;top:1077.8px" width="14" height="13"><path d="M0.3 0.3 L12.8 0.3 L6.5 11.6 Z" fill="#666"/></svg>
<svg class="a" style="left:41px;top:1072.9px" width="22" height="19" viewBox="0 0 22 19"><defs><linearGradient id="fg" x1="0" y1="0" x2="0" y2="1"><stop offset="0" stop-color="#737c82"/><stop offset="1" stop-color="#3d454a"/></linearGradient></defs><path d="M1 6 L1 2.5 Q1 0.6 3 0.6 L8.5 0.6 Q10.3 0.6 10.3 2.5 L10.3 6 Z" fill="#b9b9b9" stroke="#7a7a7a" stroke-width="0.9"/><rect x="10" y="2" width="11" height="4" fill="#707070"/><rect x="0.5" y="5" width="21" height="13.5" rx="2" fill="url(#fg)"/><rect x="1.5" y="9" width="19" height="0.8" fill="#7f878c" opacity="0.5"/></svg>
<div class="t" style="left:66.6px;top:1076.2px;font-size:16.8px;color:#000;font-weight:normal;transform:scaleX(1.13);transform-origin:0 0;">Script</div>
<svg class="a" style="left:65px;top:1097.5px" width="17" height="21" viewBox="0 0 17 21"><path d="M0.5 0.5 L12 0.5 L16.5 5 L16.5 20.5 L0.5 20.5 Z" fill="#cdd1d6" stroke="#9aa0a8"/><text x="1.5" y="16" font-family="Liberation Sans" font-size="9" fill="#5a7cc0">C#</text></svg>
<div class="t" style="left:87.6px;top:1100.2px;font-size:16.8px;color:#000;font-weight:normal;transform:scaleX(1.13);transform-origin:0 0;">CameraController</div>
<svg class="a" style="left:65px;top:1121.5px" width="17" height="21" viewBox="0 0 17 21"><path d="M0.5 0.5 L12 0.5 L16.5 5 L16.5 20.5 L0.5 20.5 Z" fill="#cdd1d6" stroke="#9aa0a8"/><text x="1.5" y="16" font-family="Liberation Sans" font-size="9" fill="#5a7cc0">C#</text></svg>
<div class="t" style="left:87.6px;top:1124.2px;font-size:16.8px;color:#000;font-weight:normal;transform:scaleX(1.13);transform-origin:0 0;">PlayerController</div>
<svg class="a" style="left:65px;top:1145.5px" width="17" height="21" viewBox="0 0 17 21"><path d="M0.5 0.5 L12 0.5 L16.5 5 L16.5 20.5 L0.5 20.5 Z" fill="#cdd1d6" stroke="#9aa0a8"/><text x="1.5" y="16" font-family="Liberation Sans" font-size="9" fill="#5a7cc0">C#</text></svg>
<div class="t" style="left:87.6px;top:1148.2px;font-size:16.8px;color:#000;font-weight:normal;transform:scaleX(1.13);transform-origin:0 0;">Rotator</div>
<svg class="a" style="left:22.5px;top:1173.8px" width="14" height="13"><path d="M0.3 0.3 L12.8 0.3 L6.5 11.6 Z" fill="#666"/></svg>
<svg class="a" style="left:41px;top:1168.9px" width="22" height="19" viewBox="0 0 22 19"><defs><linearGradient id="fg" x1="0" y1="0" x2="0" y2="1"><stop offset="0" stop-color="#737c82"/><stop offset="1" stop-color="#3d454a"/></linearGradient></defs><path d="M1 6 L1 2.5 Q1 0.6 3 0.6 L8.5 0.6 Q10.3 0.6 10.3 2.5 L10.3 6 Z" fill="#b9b9b9" stroke="#7a7a7a" stroke-width="0.9"/><rect x="10" y="2" width="11" height="4" fill="#707070"/><rect x="0.5" y="5" width="21" height="13.5" rx="2" fill="url(#fg)"/><rect x="1.5" y="9" width="19" height="0.8" fill="#7f878c" opacity="0.5"/></svg>
<div class="t" style="left:66.6px;top:1172.2px;font-size:16.8px;color:#000;font-weight:normal;transform:scaleX(1.13);transform-origin:0 0;">Sprites</div>
<svg class="a" style="left:43.5px;top:1197.8px" width="14" height="13"><path d="M0.3 0.3 L12.8 0.3 L6.5 11.6 Z" fill="#666"/></svg>
<div class="a" style="left:62px;top:1192.5px;width:23px;height:22px;background:linear-gradient(90deg,#8c9496,#a8b0b2,#8c9496,#a8b0b2);border:1px solid #7a8284"></div>
<div class="t" style="left:87.6px;top:1196.2px;font-size:16.8px;color:#000;font-weight:normal;transform:scaleX(1.13);transform-origin:0 0;">Background</div>
<svg class="a" style="left:83px;top:1216.5px" width="23" height="22"><rect x="3" y="3" width="17" height="16" fill="none" stroke="#5a7a9a" stroke-width="1.4"/><circle cx="3" cy="3" r="2.4" fill="#6a8aaa"/><circle cx="20" cy="3" r="2.4" fill="#6a8aaa"/><circle cx="3" cy="19" r="2.4" fill="#6a8aaa"/><circle cx="20" cy="19" r="2.4" fill="#6a8aaa"/><circle cx="11.5" cy="11" r="2.5" fill="none" stroke="#5a7a9a" stroke-width="1.2"/></svg>
<div class="t" style="left:108.6px;top:1220.2px;font-size:16.8px;color:#000;font-weight:normal;transform:scaleX(1.13);transform-origin:0 0;">Background</div>
<svg class="a" style="left:44.5px;top:1245.0px" width="13" height="14"><path d="M0.5 0.3 L11.8 6.5 L0.5 12.7 Z" fill="#666"/></svg>
<svg class="a" style="left:62px;top:1240.5px" width="22" height="22"><circle cx="11" cy="11" r="10" fill="#9a8a70" opacity="0.5"/><circle cx="11" cy="11" r="8" fill="#e8a030"/><circle cx="9" cy="9" r="4" fill="#f4c050" opacity="0.7"/></svg>
<div class="t" style="left:87.6px;top:1244.2px;font-size:16.8px;color:#000;font-weight:normal;transform:scaleX(1.13);transform-origin:0 0;">Pickup</div>
<svg class="a" style="left:44.5px;top:1269.0px" width="13" height="14"><path d="M0.5 0.3 L11.8 6.5 L0.5 12.7 Z" fill="#666"/></svg>
<svg class="a" style="left:62px;top:1264.5px" width="22" height="22"><circle cx="11" cy="11" r="10" fill="#2a4a6a"/><circle cx="11" cy="11" r="8.5" fill="#3a6080"/><circle cx="11" cy="11" r="4" fill="#00e0e0"/></svg>
<div class="t" style="left:87.6px;top:1268.2px;font-size:16.8px;color:#000;font-weight:normal;transform:scaleX(1.13);transform-origin:0 0;">UFO</div>
<svg class="a" style="left:22.5px;top:1293.8px" width="14" height="13"><path d="M0.3 0.3 L12.8 0.3 L6.5 11.6 Z" fill="#666"/></svg>
<svg class="a" style="left:41px;top:1288.9px" width="22" height="19" viewBox="0 0 22 19"><defs><linearGradient id="fg" x1="0" y1="0" x2="0" y2="1"><stop offset="0" stop-color="#737c82"/><stop offset="1" stop-color="#3d454a"/></linearGradient></defs><path d="M1 6 L1 2.5 Q1 0.6 3 0.6 L8.5 0.6 Q10.3 0.6 10.3 2.5 L10.3 6 Z" fill="#b9b9b9" stroke="#7a7a7a" stroke-width="0.9"/><rect x="10" y="2" width="11" height="4" fill="#707070"/><rect x="0.5" y="5" width="21" height="13.5" rx="2" fill="url(#fg)"/><rect x="1.5" y="9" width="19" height="0.8" fill="#7f878c" opacity="0.5"/></svg>
<div class="t" style="left:66.6px;top:1292.2px;font-size:16.8px;color:#000;font-weight:normal;transform:scaleX(1.13);transform-origin:0 0;">TutorialInfo</div>
<svg class="a" style="left:44.5px;top:1317.0px" width="13" height="14"><path d="M0.5 0.3 L11.8 6.5 L0.5 12.7 Z" fill="#666"/></svg>
<svg class="a" style="left:62px;top:1312.9px" width="22" height="19" viewBox="0 0 22 19"><defs><linearGradient id="fg" x1="0" y1="0" x2="0" y2="1"><stop offset="0" stop-color="#737c82"/><stop offset="1" stop-color="#3d454a"/></linearGradient></defs><path d="M1 6 L1 2.5 Q1 0.6 3 0.6 L8.5 0.6 Q10.3 0.6 10.3 2.5 L10.3 6 Z" fill="#b9b9b9" stroke="#7a7a7a" stroke-width="0.9"/><rect x="10" y="2" width="11" height="4" fill="#707070"/><rect x="0.5" y="5" width="21" height="13.5" rx="2" fill="url(#fg)"/><rect x="1.5" y="9" width="19" height="0.8" fill="#7f878c" opacity="0.5"/></svg>
<div class="t" style="left:87.6px;top:1316.2px;font-size:16.8px;color:#000;font-weight:normal;transform:scaleX(1.13);transform-origin:0 0;">Fonts</div>
<svg class="a" style="left:44.5px;top:1341.0px" width="13" height="14"><path d="M0.5 0.3 L11.8 6.5 L0.5 12.7 Z" fill="#666"/></svg>
<svg class="a" style="left:62px;top:1336.9px" width="22" height="19" viewBox="0 0 22 19"><defs><linearGradient id="fg" x1="0" y1="0" x2="0" y2="1"><stop offset="0" stop-color="#737c82"/><stop offset="1" stop-color="#3d454a"/></linearGradient></defs><path d="M1 6 L1 2.5 Q1 0.6 3 0.6 L8.5 0.6 Q10.3 0.6 10.3 2.5 L10.3 6 Z" fill="#b9b9b9" stroke="#7a7a7a" stroke-width="0.9"/><rect x="10" y="2" width="11" height="4" fill="#707070"/><rect x="0.5" y="5" width="21" height="13.5" rx="2" fill="url(#fg)"/><rect x="1.5" y="9" width="19" height="0.8" fill="#7f878c" opacity="0.5"/></svg>
<div class="t" style="left:87.6px;top:1340.2px;font-size:16.8px;color:#000;font-weight:normal;transform:scaleX(1.13);transform-origin:0 0;">Scripts</div>
<svg class="a" style="left:44.5px;top:1365.0px" width="13" height="14"><path d="M0.5 0.3 L11.8 6.5 L0.5 12.7 Z" fill="#666"/></svg>
<svg class="a" style="left:62px;top:1360.9px" width="22" height="19" viewBox="0 0 22 19"><defs><linearGradient id="fg" x1="0" y1="0" x2="0" y2="1"><stop offset="0" stop-color="#737c82"/><stop offset="1" stop-color="#3d454a"/></linearGradient></defs><path d="M1 6 L1 2.5 Q1 0.6 3 0.6 L8.5 0.6 Q10.3 0.6 10.3 2.5 L10.3 6 Z" fill="#b9b9b9" stroke="#7a7a7a" stroke-width="0.9"/><rect x="10" y="2" width="11" height="4" fill="#707070"/><rect x="0.5" y="5" width="21" height="13.5" rx="2" fill="url(#fg)"/><rect x="1.5" y="9" width="19" height="0.8" fill="#7f878c" opacity="0.5"/></svg>
<div class="t" style="left:87.6px;top:1364.2px;font-size:16.8px;color:#000;font-weight:normal;transform:scaleX(1.13);transform-origin:0 0;">Sprites</div>
<svg class="a" style="left:62px;top:1384.5px" width="22" height="22" viewBox="0 0 22 22"><path d="M11 1 L21 5.5 L11 10 L1 5.5 Z" fill="#5aa0e0"/><path d="M1 5.5 L11 10 L11 21 L1 16.5 Z" fill="#3a78c0"/><path d="M21 5.5 L11 10 L11 21 L21 16.5 Z" fill="#2a5ea0"/></svg>
<div class="t" style="left:87.6px;top:1388.2px;font-size:16.8px;color:#000;font-weight:normal;transform:scaleX(1.13);transform-origin:0 0;">Tutorial Info</div>
<svg class="a" style="left:40px;top:1409.5px" width="21" height="21" viewBox="0 0 24 24"><path d="M19.5 1.5 L2 12 L19.5 22.5 L22.5 12 Z" fill="none" stroke="#111" stroke-width="2.6" stroke-linejoin="round"/><path d="M2 12 L15 12 M19.5 1.5 L15 12 L19.5 22.5" fill="none" stroke="#111" stroke-width="2.4"/></svg>
<div class="t" style="left:66.6px;top:1412.2px;font-size:16.8px;color:#000;font-weight:normal;transform:scaleX(1.13);transform-origin:0 0;">_Complete-Game</div>
<svg class="a" style="left:2.5px;top:1437.0px" width="13" height="14"><path d="M0.5 0.3 L11.8 6.5 L0.5 12.7 Z" fill="#666"/></svg>
<svg class="a" style="left:20px;top:1432.9px" width="22" height="19" viewBox="0 0 22 19"><defs><linearGradient id="fg" x1="0" y1="0" x2="0" y2="1"><stop offset="0" stop-color="#737c82"/><stop offset="1" stop-color="#3d454a"/></linearGradient></defs><path d="M1 6 L1 2.5 Q1 0.6 3 0.6 L8.5 0.6 Q10.3 0.6 10.3 2.5 L10.3 6 Z" fill="#b9b9b9" stroke="#7a7a7a" stroke-width="0.9"/><rect x="10" y="2" width="11" height="4" fill="#707070"/><rect x="0.5" y="5" width="21" height="13.5" rx="2" fill="url(#fg)"/><rect x="1.5" y="9" width="19" height="0.8" fill="#7f878c" opacity="0.5"/></svg>
<div class="t" style="left:45.6px;top:1436.2px;font-size:16.8px;color:#000;font-weight:bold;transform:scaleX(1.13);transform-origin:0 0;">Packages</div>
<div class="menu" style="left:3px;top:171px;width:261px;height:316px"></div>
<div class="t" style="left:47px;top:182.2px;font-size:18.3px;color:#000;font-weight:normal;transform:scaleX(0.95);transform-origin:0 0;">Create Empty</div>
<div class="t" style="left:47px;top:213.2px;font-size:18.3px;color:#000;font-weight:normal;transform:scaleX(0.95);transform-origin:0 0;">Create Empty Child</div>
<div class="t" style="left:47px;top:244.2px;font-size:18.3px;color:#000;font-weight:normal;transform:scaleX(0.95);transform-origin:0 0;">3D Object</div>
<svg class="a" style="left:244px;top:246px" width="8" height="12"><path d="M1 1 L6.5 6 L1 11" fill="none" stroke="#222" stroke-width="1.3"/></svg>
<div class="t" style="left:47px;top:275.2px;font-size:18.3px;color:#000;font-weight:normal;transform:scaleX(0.95);transform-origin:0 0;">2D Object</div>
<svg class="a" style="left:244px;top:277px" width="8" height="12"><path d="M1 1 L6.5 6 L1 11" fill="none" stroke="#222" stroke-width="1.3"/></svg>
<div class="t" style="left:47px;top:306.2px;font-size:18.3px;color:#000;font-weight:normal;transform:scaleX(0.95);transform-origin:0 0;">Effects</div>
<svg class="a" style="left:244px;top:308px" width="8" height="12"><path d="M1 1 L6.5 6 L1 11" fill="none" stroke="#222" stroke-width="1.3"/></svg>
<div class="t" style="left:47px;top:337.2px;font-size:18.3px;color:#000;font-weight:normal;transform:scaleX(0.95);transform-origin:0 0;">Light</div>
<svg class="a" style="left:244px;top:339px" width="8" height="12"><path d="M1 1 L6.5 6 L1 11" fill="none" stroke="#222" stroke-width="1.3"/></svg>
<div class="t" style="left:47px;top:368.2px;font-size:18.3px;color:#000;font-weight:normal;transform:scaleX(0.95);transform-origin:0 0;">Audio</div>
<svg class="a" style="left:244px;top:370px" width="8" height="12"><path d="M1 1 L6.5 6 L1 11" fill="none" stroke="#222" stroke-width="1.3"/></svg>
<div class="t" style="left:47px;top:399.2px;font-size:18.3px;color:#000;font-weight:normal;transform:scaleX(0.95);transform-origin:0 0;">Video</div>
<svg class="a" style="left:244px;top:401px" width="8" height="12"><path d="M1 1 L6.5 6 L1 11" fill="none" stroke="#222" stroke-width="1.3"/></svg>
<div class="a" style="left:6px;top:421.7px;width:253px;height:30.8px;background:#91c9f7"></div>
<div class="t" style="left:47px;top:430.2px;font-size:18.3px;color:#000;font-weight:normal;transform:scaleX(0.95);transform-origin:0 0;">UI</div>
<svg class="a" style="left:244px;top:432px" width="8" height="12"><path d="M1 1 L6.5 6 L1 11" fill="none" stroke="#222" stroke-width="1.3"/></svg>
<div class="t" style="left:47px;top:461.2px;font-size:18.3px;color:#000;font-weight:normal;transform:scaleX(0.95);transform-origin:0 0;">Camera</div>
<div class="menu" style="left:258px;top:419px;width:313px;height:502px;border-left:1px solid #9c9c9c;background:#f0f0f0"></div>
<div class="a" style="left:261px;top:422px;width:307px;height:31px;background:#91c9f7"></div>
<div class="t" style="left:302px;top:429.9px;font-size:18.3px;color:#000;font-weight:normal;transform:scaleX(0.95);transform-origin:0 0;">Text</div>
<div class="t" style="left:302px;top:460.9px;font-size:18.3px;color:#000;font-weight:normal;transform:scaleX(0.95);transform-origin:0 0;">TextMeshPro - Text</div>
<div class="t" style="left:302px;top:491.9px;font-size:18.3px;color:#000;font-weight:normal;transform:scaleX(0.95);transform-origin:0 0;">Image</div>
<div class="t" style="left:302px;top:522.9px;font-size:18.3px;color:#000;font-weight:normal;transform:scaleX(0.95);transform-origin:0 0;">Raw Image</div>
<div class="t" style="left:302px;top:553.9px;font-size:18.3px;color:#000;font-weight:normal;transform:scaleX(0.95);transform-origin:0 0;">Button</div>
<div class="t" style="left:302px;top:584.9px;font-size:18.3px;color:#000;font-weight:normal;transform:scaleX(0.95);transform-origin:0 0;">Toggle</div>
<div class="t" style="left:302px;top:615.9px;font-size:18.3px;color:#000;font-weight:normal;transform:scaleX(0.95);transform-origin:0 0;">Slider</div>
<div class="t" style="left:302px;top:646.9px;font-size:18.3px;color:#000;font-weight:normal;transform:scaleX(0.95);transform-origin:0 0;">Scrollbar</div>
<div class="t" style="left:302px;top:677.9px;font-size:18.3px;color:#000;font-weight:normal;transform:scaleX(0.95);transform-origin:0 0;">Dropdown</div>
<div class="t" style="left:302px;top:708.9px;font-size:18.3px;color:#000;font-weight:normal;transform:scaleX(0.95);transform-origin:0 0;">TextMeshPro - Dropdown</div>
<div class="t" style="left:302px;top:739.9px;font-size:18.3px;color:#000;font-weight:normal;transform:scaleX(0.95);transform-origin:0 0;">Input Field</div>
<div class="t" style="left:302px;top:770.9px;font-size:18.3px;color:#000;font-weight:normal;transform:scaleX(0.95);transform-origin:0 0;">TextMeshPro - Input Field</div>
<div class="t" style="left:302px;top:801.9px;font-size:18.3px;color:#000;font-weight:normal;transform:scaleX(0.95);transform-origin:0 0;">Canvas</div>
<div class="t" style="left:302px;top:832.9px;font-size:18.3px;color:#000;font-weight:normal;transform:scaleX(0.95);transform-origin:0 0;">Panel</div>
<div class="t" style="left:302px;top:863.9px;font-size:18.3px;color:#000;font-weight:normal;transform:scaleX(0.95);transform-origin:0 0;">Scroll View</div>
<div class="t" style="left:302px;top:894.9px;font-size:18.3px;color:#000;font-weight:normal;transform:scaleX(0.95);transform-origin:0 0;">Event System</div>
</body></html>
